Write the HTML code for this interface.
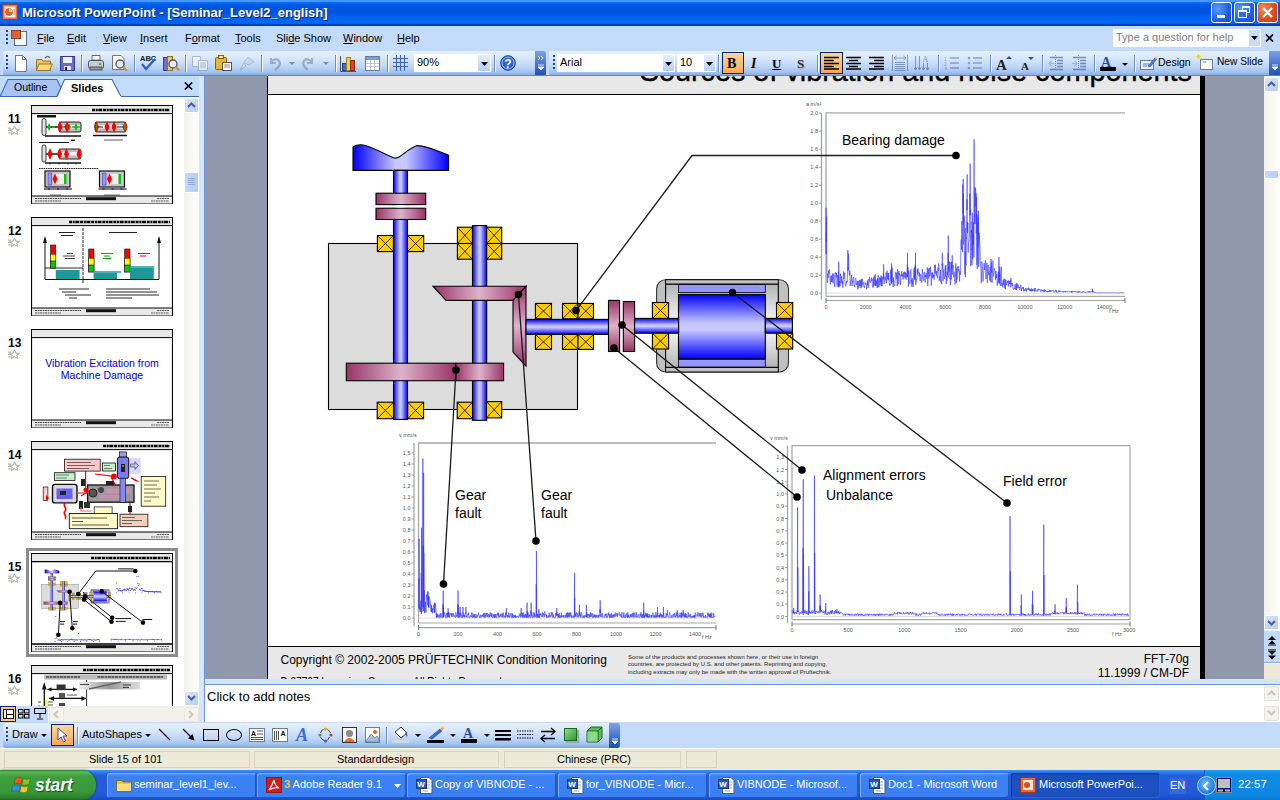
<!DOCTYPE html>
<html><head><meta charset="utf-8">
<style>
*{margin:0;padding:0;box-sizing:border-box}
html,body{width:1280px;height:800px;overflow:hidden;background:#C3DAF9;font-family:"Liberation Sans",sans-serif;}
.a{position:absolute}
.t{position:absolute;white-space:pre;line-height:1}
#title{left:0;top:0;width:1280px;height:26px;background:linear-gradient(#4C9DFF 0px,#4096FF 1.5px,#0A6EFC 2.5px,#005CE8 4px,#0054DE 8px,#0055E0 13px,#0062EE 17px,#0067F6 22px,#0060EE 23.5px,#0040C8 24.5px,#0038B8 26px)}
#menubar{left:0;top:26px;width:1280px;height:25px;background:#C3DAF9}
.tb{position:absolute;height:25px;border-radius:0 4px 4px 0;background:linear-gradient(#E6F1FE 0%,#D6E6FB 30%,#C0D7F7 60%,#A3C2F0 85%,#7EA4E0 100%);}
.grip{position:absolute;width:2px;height:2px;background:#27418F;box-shadow:1px 1px 0 #fff}
.sep{position:absolute;width:1px;height:17px;background:#6A8CCB;box-shadow:1px 0 0 #fff}
.menu{font-size:11px;color:#000;top:32px;line-height:13px}
u{text-decoration:underline;text-underline-offset:1px}
</style></head><body>

<!-- TITLE BAR -->
<div id="title" class="a">
  <svg class="a" style="left:2px;top:4px" width="16" height="16"><rect x=".5" y=".5" width="15" height="15" rx="1" fill="#E8703A" stroke="#A8401A"/><rect x="2.5" y="2.5" width="11" height="11" fill="#FFF4EC"/><circle cx="7" cy="8" r="3.6" fill="#E06428" stroke="#B04818" stroke-width=".6"/><path d="M7 8V4.4A3.6 3.6 0 0 1 10.6 8Z" fill="#F8C8A0"/><path d="M11.5 6H13M11.5 8H13M11.5 10H13" stroke="#C05020" stroke-width=".9"/></svg>
  <div class="t" style="left:22px;top:6px;font-size:13px;font-weight:bold;color:#fff;text-shadow:1px 1px 0 #0A246A">Microsoft PowerPoint - [Seminar_Level2_english]</div>
  <div class="a" style="left:1211px;top:2px;width:21px;height:21px;border:1px solid #fff;border-radius:3px;background:radial-gradient(circle at 30% 30%,#5C9BFF,#1F5FE6 60%,#1848C8)"><div class="a" style="left:5px;top:12px;width:8px;height:3px;background:#fff"></div></div>
  <div class="a" style="left:1234px;top:2px;width:21px;height:21px;border:1px solid #fff;border-radius:3px;background:radial-gradient(circle at 30% 30%,#5C9BFF,#1F5FE6 60%,#1848C8)"><div class="a" style="left:7px;top:3px;width:8px;height:7px;border:1px solid #fff;border-top-width:2px"></div><div class="a" style="left:3px;top:7px;width:9px;height:8px;border:1px solid #fff;border-top-width:2px;background:#2D6BEA"></div></div>
  <div class="a" style="left:1257px;top:2px;width:21px;height:21px;border:1px solid #fff;border-radius:3px;background:radial-gradient(circle at 30% 30%,#F08A5E,#DE4A1E 60%,#C8380E)">
    <svg class="a" style="left:3px;top:3px" width="13" height="13"><path d="M2 2L11 11M11 2L2 11" stroke="#fff" stroke-width="2.2"/></svg></div>
</div>

<!-- MENU BAR -->
<div id="menubar" class="a"></div>
<div class="a" style="left:6px;top:30px;width:2px;height:15px;background:repeating-linear-gradient(#27418F 0 2px,transparent 2px 4px)"></div>
<div class="a" style="left:11px;top:29px;width:17px;height:17px">
  <div class="a" style="left:3px;top:2px;width:13px;height:15px;background:#F5F8FC;border:1px solid #5B6F8C"></div>
  <div class="a" style="left:0;top:1px;width:10px;height:9px;background:#E06030;border:1px solid #A03C10"></div>
</div>
<div class="t menu" style="left:37px"><u>F</u>ile</div>
<div class="t menu" style="left:67px"><u>E</u>dit</div>
<div class="t menu" style="left:103px"><u>V</u>iew</div>
<div class="t menu" style="left:140px"><u>I</u>nsert</div>
<div class="t menu" style="left:185px">F<u>o</u>rmat</div>
<div class="t menu" style="left:235px"><u>T</u>ools</div>
<div class="t menu" style="left:276px">Sli<u>d</u>e Show</div>
<div class="t menu" style="left:343px"><u>W</u>indow</div>
<div class="t menu" style="left:397px"><u>H</u>elp</div>
<div class="a" style="left:1113px;top:29px;width:148px;height:18px;background:#fff"></div>
<div class="a" style="left:1249px;top:30px;width:11px;height:16px;background:#C6DBF8"></div>
<svg class="a" style="left:1251px;top:36px" width="7" height="4"><path d="M0 0H7L3.5 4Z" fill="#000"/></svg>
<div class="t" style="left:1116px;top:32px;font-size:11px;color:#808080">Type a question for help</div>
<svg class="a" style="left:1265px;top:34px" width="9" height="8"><path d="M1 0.5L8 7.5M8 0.5L1 7.5" stroke="#000" stroke-width="1.6"/></svg>

<!-- STANDARD TOOLBAR -->
<div class="tb" style="left:3px;top:51px;width:543px;border-radius:3px"></div>
<div class="a" style="left:535px;top:51px;width:11px;height:25px;border-radius:0 3px 3px 0;background:linear-gradient(#7DA2E6,#1C4DB3)"></div>
<div class="tb" style="left:549px;top:51px;width:731px;border-radius:3px 0 0 3px"></div>
<div class="a" style="left:1269px;top:51px;width:11px;height:25px;background:linear-gradient(#7DA2E6,#1C4DB3)"></div>
<div class="a" style="left:0;top:75px;width:1280px;height:1px;background:#5D86CC"></div>


<!-- standard toolbar content -->
<div class="a" style="left:6px;top:55px;width:2px;height:16px;background:repeating-linear-gradient(#27418F 0 2px,transparent 2px 4px)"></div>
<svg class="a" style="left:14px;top:55px" width="14" height="17"><path d="M1.5 0.5H8.5L12.5 4.5V16.5H1.5Z" fill="#fff" stroke="#6E7A8A"/><path d="M8.5 0.5V4.5H12.5" fill="none" stroke="#6E7A8A"/></svg>
<svg class="a" style="left:36px;top:55px" width="17" height="16"><path d="M0.5 4.5H6L7 6H14.5V15.5H0.5Z" fill="#E8C060" stroke="#A07820"/><path d="M3 9H16.5L13.5 15.5H0.5Z" fill="#F8D878" stroke="#A07820"/><path d="M9 3Q12 0 14 3" fill="none" stroke="#5A7090" stroke-width="1.3"/></svg>
<svg class="a" style="left:60px;top:56px" width="15" height="15"><rect x="0.5" y="0.5" width="14" height="14" fill="#6A6ACC" stroke="#3A3A8A"/><rect x="3" y="1" width="9" height="6" fill="#F0F0F8"/><rect x="4" y="10" width="7" height="4" fill="#E8E8F0"/><rect x="5" y="11" width="2" height="3" fill="#222"/></svg>
<div class="sep" style="left:81px;top:55px"></div>
<svg class="a" style="left:88px;top:55px" width="16" height="16"><path d="M4 0.5H12V5H4Z" fill="#fff" stroke="#666"/><rect x="0.5" y="5.5" width="15" height="8" rx="2" fill="#C8CCD4" stroke="#555"/><rect x="2" y="12" width="12" height="3" fill="#9098A0" stroke="#555"/><rect x="11" y="8" width="2" height="2" fill="#20C020"/></svg>
<svg class="a" style="left:112px;top:55px" width="16" height="17"><path d="M0.5 0.5H9L12 3.5V14.5H0.5Z" fill="#fff" stroke="#777"/><circle cx="8" cy="9" r="4" fill="#E0EAF4" stroke="#555" stroke-width="1.3"/><path d="M11 12L15 16" stroke="#D89030" stroke-width="2.4"/></svg>
<div class="sep" style="left:134px;top:55px"></div>
<svg class="a" style="left:140px;top:54px" width="17" height="17"><text x="0" y="7" font-family="Liberation Sans" font-size="7.5" font-weight="bold" fill="#222">ABC</text><path d="M2 10L6 15L15 5" fill="none" stroke="#2C5CC8" stroke-width="2.2"/></svg>
<svg class="a" style="left:163px;top:55px" width="17" height="17"><rect x="0.5" y="2.5" width="4" height="13" fill="#7A6AD0" stroke="#4A3A90"/><rect x="4.5" y="1.5" width="5" height="14" fill="#E8C860" stroke="#907020"/><circle cx="10" cy="9" r="4" fill="#E4ECF8" stroke="#555" stroke-width="1.3"/><path d="M13 12L16 15.5" stroke="#D89030" stroke-width="2.4"/></svg>
<div class="sep" style="left:185px;top:55px"></div>
<svg class="a" style="left:192px;top:56px" width="16" height="15" opacity=".55"><path d="M0.5 0.5H8.5V10.5H0.5Z" fill="#fff" stroke="#8A96A8"/><path d="M6.5 4.5H15.5V14.5H6.5Z" fill="#fff" stroke="#8A96A8"/><path d="M8 7H14M8 9H14M8 11H14" stroke="#8A96A8"/></svg>
<svg class="a" style="left:215px;top:55px" width="17" height="17"><rect x="0.5" y="2.5" width="11" height="12" rx="1" fill="#E8B830" stroke="#906010"/><rect x="3.5" y="0.5" width="5" height="3" fill="#F8E090" stroke="#906010"/><rect x="7.5" y="7.5" width="9" height="8" fill="#fff" stroke="#555"/><path d="M9 10H15M9 12H15" stroke="#888"/></svg>
<svg class="a" style="left:239px;top:56px" width="16" height="15" opacity=".5"><path d="M9 1L15 6L9 9L5 6Z" fill="#C8D0DC" stroke="#8A96A8"/><path d="M5 7L1 14L7 10Z" fill="#D8DEE8" stroke="#8A96A8"/></svg>
<div class="sep" style="left:261px;top:55px"></div>
<svg class="a" style="left:268px;top:56px" width="14" height="15" opacity=".5"><path d="M3 2V7H8" fill="none" stroke="#6A7C98" stroke-width="2"/><path d="M3 6Q8 1 11 5T7 14" fill="none" stroke="#6A7C98" stroke-width="2.2"/></svg>
<svg class="a" style="left:289px;top:62px" width="6" height="3" opacity=".6"><path d="M0 0H6L3 3Z" fill="#555"/></svg>
<svg class="a" style="left:301px;top:56px" width="14" height="15" opacity=".5"><path d="M11 2V7H6" fill="none" stroke="#6A7C98" stroke-width="2"/><path d="M11 6Q6 1 3 5T7 14" fill="none" stroke="#6A7C98" stroke-width="2.2"/></svg>
<svg class="a" style="left:323px;top:62px" width="6" height="3" opacity=".6"><path d="M0 0H6L3 3Z" fill="#555"/></svg>
<div class="sep" style="left:335px;top:55px"></div>
<svg class="a" style="left:340px;top:55px" width="17" height="17"><path d="M0.5 1V16.5H16" fill="none" stroke="#555"/><rect x="2.5" y="8.5" width="4" height="7" fill="#3C6CE0" stroke="#24409A"/><rect x="6.5" y="2.5" width="4" height="13" fill="#F0D040" stroke="#A08010"/><rect x="10.5" y="5.5" width="4" height="10" fill="#D84820" stroke="#902810"/></svg>
<svg class="a" style="left:365px;top:56px" width="15" height="15"><rect x="0.5" y="0.5" width="14" height="14" fill="#fff" stroke="#6A7C98"/><rect x="1" y="1" width="13" height="3" fill="#7A9CD8"/><path d="M1 7.5H14M1 10.5H14M5.5 4V14M9.5 4V14" stroke="#B8C4D8"/></svg>
<div class="sep" style="left:387px;top:55px"></div>
<svg class="a" style="left:393px;top:55px" width="16" height="16"><path d="M3.5 0V16M7.5 0V16M11.5 0V16M0 3.5H15M0 7.5H15M0 11.5H15" stroke="#3C64B8"/></svg>
<div class="a" style="left:414px;top:54px;width:77px;height:18px;background:#fff"></div>
<div class="a" style="left:478px;top:55px;width:12px;height:16px;background:linear-gradient(#E6F0FD,#B4CDF2)"></div>
<svg class="a" style="left:481px;top:62px" width="7" height="4"><path d="M0 0H7L3.5 4Z" fill="#000"/></svg>
<div class="t" style="left:417px;top:57px;font-size:11px;color:#000">90%</div>
<div class="sep" style="left:494px;top:55px"></div>
<svg class="a" style="left:500px;top:55px" width="16" height="16"><circle cx="8" cy="8" r="7.3" fill="#2C64D8" stroke="#1A3C90"/><circle cx="8" cy="8" r="6" fill="none" stroke="#9CC0F4"/><text x="8" y="12.5" text-anchor="middle" font-family="Liberation Sans" font-weight="bold" font-size="12" fill="#fff">?</text></svg>
<svg class="a" style="left:537px;top:55px" width="8" height="18"><path d="M1 1L3 3L1 5M4 1L6 3L4 5" fill="none" stroke="#fff" stroke-width="1"/><path d="M1 10H7M1 12H7L4 15Z" fill="#fff" stroke="#fff" stroke-width=".8"/></svg>

<!-- formatting toolbar content -->
<div class="a" style="left:553px;top:55px;width:2px;height:16px;background:repeating-linear-gradient(#27418F 0 2px,transparent 2px 4px)"></div>
<div class="a" style="left:557px;top:54px;width:118px;height:18px;background:#fff"></div>
<div class="a" style="left:663px;top:55px;width:11px;height:16px;background:linear-gradient(#E6F0FD,#B4CDF2)"></div>
<svg class="a" style="left:665px;top:62px" width="7" height="4"><path d="M0 0H7L3.5 4Z" fill="#000"/></svg>
<div class="t" style="left:560px;top:57px;font-size:11px;color:#000">Arial</div>
<div class="a" style="left:677px;top:54px;width:39px;height:18px;background:#fff"></div>
<div class="a" style="left:704px;top:55px;width:11px;height:16px;background:linear-gradient(#E6F0FD,#B4CDF2)"></div>
<svg class="a" style="left:706px;top:62px" width="7" height="4"><path d="M0 0H7L3.5 4Z" fill="#000"/></svg>
<div class="t" style="left:680px;top:57px;font-size:11px;color:#000">10</div>
<div class="sep" style="left:718px;top:55px"></div>
<div class="a" style="left:722px;top:52px;width:22px;height:22px;border:1px solid #0A246A;background:linear-gradient(#FDD5A0,#F9A952)"></div>
<div class="t" style="left:727px;top:56px;font:bold 14px 'Liberation Serif';color:#000">B</div>
<div class="t" style="left:751px;top:56px;font:italic bold 14px 'Liberation Serif';color:#000">I</div>
<div class="t" style="left:772px;top:56px;font:bold 13px 'Liberation Serif';color:#000;text-decoration:underline">U</div>
<div class="t" style="left:797px;top:56px;font:bold 13px 'Liberation Serif';color:#333;text-shadow:1px 1px 1px #999">S</div>
<div class="sep" style="left:817px;top:55px"></div>
<div class="a" style="left:820px;top:52px;width:23px;height:22px;border:1px solid #0A246A;background:linear-gradient(#FDD5A0,#F9A952)"></div>
<svg class="a" style="left:824px;top:56px" width="15" height="14"><path d="M0 1.5H15M0 4.5H10M0 7.5H15M0 10.5H10M0 13H15" stroke="#000" stroke-width="1.3"/></svg>
<svg class="a" style="left:846px;top:56px" width="15" height="14"><path d="M0 1.5H15M3 4.5H12M0 7.5H15M3 10.5H12M0 13H15" stroke="#000" stroke-width="1.3"/></svg>
<svg class="a" style="left:869px;top:56px" width="15" height="14"><path d="M0 1.5H15M5 4.5H15M0 7.5H15M5 10.5H15M0 13H15" stroke="#000" stroke-width="1.3"/></svg>
<svg class="a" style="left:892px;top:55px" width="16" height="16" opacity=".5"><path d="M.5 0V16M15.5 0V16M3 7.5H13M3 9.5H13M3 11.5H13M3 13.5H13M3 15.5H13" stroke="#3C5490"/><path d="M2 3H14M4.5 1L2 3L4.5 5M11.5 1L14 3L11.5 5" fill="none" stroke="#3C5490"/></svg>
<svg class="a" style="left:914px;top:55px" width="16" height="16" opacity=".55"><path d="M1.5 1V15M5.5 1V15M9.5 8V15M13.5 8V15" stroke="#3C5490"/><path d="M0 12.5L1.5 15L3 12.5M4 12.5L5.5 15L7 12.5M8 12.5L9.5 15L11 12.5M12 12.5L13.5 15L15 12.5" fill="none" stroke="#3C5490"/><text x="8.5" y="7" font-size="8" font-family="Liberation Serif" fill="#3C5490">A</text></svg>
<div class="sep" style="left:938px;top:55px"></div>
<svg class="a" style="left:944px;top:56px" width="16" height="14" opacity=".45"><path d="M6 2H15M6 7H15M6 12H15" stroke="#3C5490" stroke-width="1.3"/><text x="0" y="5" font-size="5" fill="#3C5490" font-family="Liberation Sans">1</text><text x="0" y="10" font-size="5" fill="#3C5490" font-family="Liberation Sans">2</text><text x="0" y="14.5" font-size="5" fill="#3C5490" font-family="Liberation Sans">3</text></svg>
<svg class="a" style="left:967px;top:56px" width="15" height="14" opacity=".45"><path d="M6 2H15M6 7H15M6 12H15" stroke="#3C5490" stroke-width="1.3"/><circle cx="2" cy="2" r="1.3" fill="#3C5490"/><circle cx="2" cy="7" r="1.3" fill="#3C5490"/><circle cx="2" cy="12" r="1.3" fill="#3C5490"/></svg>
<div class="sep" style="left:990px;top:55px"></div>
<div class="t" style="left:996px;top:57px;font:bold 15px 'Liberation Serif';color:#222">A</div>
<svg class="a" style="left:1006px;top:56px" width="6" height="3"><path d="M0 3H6L3 0Z" fill="#2A4C9C"/></svg>
<div class="t" style="left:1021px;top:60px;font:bold 11px 'Liberation Serif';color:#222">A</div>
<svg class="a" style="left:1028px;top:57px" width="6" height="3"><path d="M0 0H6L3 3Z" fill="#2A4C9C"/></svg>
<div class="sep" style="left:1042px;top:55px"></div>
<svg class="a" style="left:1048px;top:55px" width="16" height="16" opacity=".6"><path d="M7.5 0V16" stroke="#3C5490" stroke-dasharray="1 1"/><path d="M2 2.5H15M9 5.5H15M9 8.5H15M9 11.5H15M2 14.5H15" stroke="#3C5490" stroke-width="1.3"/><path d="M6 8.5H1M3.5 6L1 8.5L3.5 11" fill="none" stroke="#8A9AB8" stroke-width="1.2"/></svg>
<svg class="a" style="left:1071px;top:55px" width="16" height="16" opacity=".6"><path d="M7.5 0V16" stroke="#3C5490" stroke-dasharray="1 1"/><path d="M2 2.5H15M9 5.5H15M9 8.5H15M9 11.5H15M2 14.5H15" stroke="#3C5490" stroke-width="1.3"/><path d="M1 8.5H6M3.5 6L6 8.5L3.5 11" fill="none" stroke="#8A9AB8" stroke-width="1.2"/></svg>
<div class="sep" style="left:1094px;top:55px"></div>
<div class="t" style="left:1101px;top:55px;font:bold 14px 'Liberation Serif';color:#2A4C9C">A</div>
<div class="a" style="left:1100px;top:67px;width:16px;height:4px;background:#000"></div>
<svg class="a" style="left:1122px;top:63px" width="6" height="3"><path d="M0 0H6L3 3Z" fill="#000"/></svg>
<div class="sep" style="left:1134px;top:55px"></div>
<svg class="a" style="left:1140px;top:56px" width="17" height="15"><rect x="0.5" y="4.5" width="13" height="9" fill="#E8EEF8" stroke="#6A7C98"/><path d="M3 8H9M3 10H7" stroke="#5A7CC8"/><path d="M8 10L15 2L16.5 3.5L10 11Z" fill="#4A7CD8" stroke="#2A4C9C" stroke-width=".6"/><path d="M14 1.5L16 0.5L17 2L16 3.5Z" fill="#F0B030"/></svg>
<div class="t" style="left:1158px;top:57px;font-size:10.5px;color:#000">Design</div>
<svg class="a" style="left:1196px;top:54px" width="18" height="17"><path d="M1 1L4 4M4 1L1 4M0 2.5H5M2.5 0V5" stroke="#F8D020" stroke-width="1"/><rect x="4.5" y="5.5" width="12" height="10" fill="#F8F8F4" stroke="#6A7C98"/><path d="M7 8H10" stroke="#6A7C98"/></svg>
<div class="t" style="left:1217px;top:57px;font-size:10.2px;color:#000">New Slide</div>
<svg class="a" style="left:1271px;top:64px" width="8" height="8"><path d="M1 1H7M1 3H7L4 6Z" fill="#fff" stroke="#fff" stroke-width=".8"/></svg>



<!-- SLIDE AREA -->
<div class="a" style="left:205px;top:76px;width:1059px;height:603px;background:#8F98AD;overflow:hidden">
  <div class="a" style="left:62px;top:-35px;width:938px;height:658px;background:#000"></div>
  <svg class="a" style="left:63px;top:-35px" width="932" height="653"><use href="#s15"/></svg>
</div>
<svg width="0" height="0" style="position:absolute"><defs>
<linearGradient id="gbh" x1="0" y1="0" x2="1" y2="0"><stop offset="0" stop-color="#0000FF"/><stop offset=".45" stop-color="#C8C8FF"/><stop offset=".55" stop-color="#C8C8FF"/><stop offset="1" stop-color="#0000FF"/></linearGradient>
<linearGradient id="gbv" x1="0" y1="0" x2="0" y2="1"><stop offset="0" stop-color="#0000FF"/><stop offset=".45" stop-color="#C8C8FF"/><stop offset=".55" stop-color="#C8C8FF"/><stop offset="1" stop-color="#0000FF"/></linearGradient>
<linearGradient id="gmh" x1="0" y1="0" x2="1" y2="0"><stop offset="0" stop-color="#993366"/><stop offset=".5" stop-color="#DDB3CC"/><stop offset="1" stop-color="#993366"/></linearGradient>
<linearGradient id="gmv" x1="0" y1="0" x2="0" y2="1"><stop offset="0" stop-color="#993366"/><stop offset=".5" stop-color="#DDB3CC"/><stop offset="1" stop-color="#993366"/></linearGradient>
<linearGradient id="ggv" x1="0" y1="0" x2="0" y2="1"><stop offset="0" stop-color="#B4B4B4"/><stop offset=".5" stop-color="#FFFFFF"/><stop offset="1" stop-color="#B4B4B4"/></linearGradient>
<symbol id="s15d" viewBox="268 41 932 653"><rect x="328.5" y="243.5" width="249" height="166" fill="#DCDCDC" stroke="#000" stroke-width="1.1"/><path d="M353 147 C 362 141, 372 148, 393.5 157.8 C 400 160, 405 150, 417 145.6 C 428 146, 440 152, 448.6 155.3 V170.4 H353 Z" fill="url(#gbh)" stroke="#000" stroke-width="1.1"/><rect x="393.5" y="170.4" width="14" height="249" fill="url(#gbh)" stroke="#000" stroke-width="1.1"/><rect x="376" y="193.2" width="49.7" height="11.4" fill="url(#gmh)" stroke="#000" stroke-width="1.1"/><rect x="376" y="208.2" width="49.7" height="11.3" fill="url(#gmh)" stroke="#000" stroke-width="1.1"/><rect x="393" y="205.2" width="15" height="2.4" fill="#fff"/><rect x="377.4" y="235.5" width="16" height="16.1" fill="#FFCC00" stroke="#000" stroke-width="1.1"/><path d="M377.4 235.5L393.4 251.6M393.4 235.5L377.4 251.6" stroke="#000" stroke-width=".8"/><rect x="407.5" y="235.5" width="16.2" height="16.1" fill="#FFCC00" stroke="#000" stroke-width="1.1"/><path d="M407.5 235.5L423.7 251.6M423.7 235.5L407.5 251.6" stroke="#000" stroke-width=".8"/><rect x="377.2" y="402.2" width="16.3" height="16.5" fill="#FFCC00" stroke="#000" stroke-width="1.1"/><path d="M377.2 402.2L393.5 418.7M393.5 402.2L377.2 418.7" stroke="#000" stroke-width=".8"/><rect x="407.7" y="402.2" width="15.9" height="16.5" fill="#FFCC00" stroke="#000" stroke-width="1.1"/><path d="M407.7 402.2L423.59999999999997 418.7M423.59999999999997 402.2L407.7 418.7" stroke="#000" stroke-width=".8"/><rect x="472.5" y="225.6" width="14.2" height="194.7" fill="url(#gbh)" stroke="#000" stroke-width="1.1"/><rect x="457.4" y="227.2" width="15" height="16.3" fill="#FFCC00" stroke="#000" stroke-width="1.1"/><path d="M457.4 227.2L472.4 243.5M472.4 227.2L457.4 243.5" stroke="#000" stroke-width=".8"/><rect x="457.4" y="243.5" width="15" height="15.7" fill="#FFCC00" stroke="#000" stroke-width="1.1"/><path d="M457.4 243.5L472.4 259.2M472.4 243.5L457.4 259.2" stroke="#000" stroke-width=".8"/><rect x="486.7" y="227.2" width="15" height="16.3" fill="#FFCC00" stroke="#000" stroke-width="1.1"/><path d="M486.7 227.2L501.7 243.5M501.7 227.2L486.7 243.5" stroke="#000" stroke-width=".8"/><rect x="486.7" y="243.5" width="15" height="15.7" fill="#FFCC00" stroke="#000" stroke-width="1.1"/><path d="M486.7 243.5L501.7 259.2M501.7 243.5L486.7 259.2" stroke="#000" stroke-width=".8"/><rect x="457.2" y="402.2" width="15.3" height="16.5" fill="#FFCC00" stroke="#000" stroke-width="1.1"/><path d="M457.2 402.2L472.5 418.7M472.5 402.2L457.2 418.7" stroke="#000" stroke-width=".8"/><rect x="486.5" y="401.6" width="15.2" height="16.3" fill="#FFCC00" stroke="#000" stroke-width="1.1"/><path d="M486.5 401.6L501.7 417.90000000000003M501.7 401.6L486.5 417.90000000000003" stroke="#000" stroke-width=".8"/><rect x="346.3" y="363.2" width="109.5" height="17.5" fill="url(#gmh)" stroke="#000" stroke-width="1.1"/><rect x="455.8" y="363.2" width="47.8" height="17.5" fill="url(#gmh)" stroke="#000" stroke-width="1.1"/><path d="M433 286.2 H526 L513 300.4 H446 Z" fill="url(#gmh)" stroke="#000" stroke-width="1.1"/><path d="M526 286.2 V366 L513 352 V300.4 Z" fill="url(#gmv)" stroke="#000" stroke-width="1.1"/><rect x="526" y="319.4" width="82.5" height="15" fill="url(#gbv)" stroke="#000" stroke-width="1.1"/><rect x="535.4" y="303.4" width="16.1" height="15.35" fill="#FFCC00" stroke="#000" stroke-width="1.1"/><path d="M535.4 303.4L551.5 318.75M551.5 303.4L535.4 318.75" stroke="#000" stroke-width=".8"/><rect x="535.4" y="334.4" width="16.1" height="15" fill="#FFCC00" stroke="#000" stroke-width="1.1"/><path d="M535.4 334.4L551.5 349.4M551.5 334.4L535.4 349.4" stroke="#000" stroke-width=".8"/><rect x="562.5" y="303.4" width="15.5" height="15.35" fill="#FFCC00" stroke="#000" stroke-width="1.1"/><path d="M562.5 303.4L578.0 318.75M578.0 303.4L562.5 318.75" stroke="#000" stroke-width=".8"/><rect x="562.5" y="334.4" width="15.5" height="15" fill="#FFCC00" stroke="#000" stroke-width="1.1"/><path d="M562.5 334.4L578.0 349.4M578.0 334.4L562.5 349.4" stroke="#000" stroke-width=".8"/><rect x="578" y="303.4" width="15.5" height="15.35" fill="#FFCC00" stroke="#000" stroke-width="1.1"/><path d="M578 303.4L593.5 318.75M593.5 303.4L578 318.75" stroke="#000" stroke-width=".8"/><rect x="578" y="334.4" width="15.5" height="15" fill="#FFCC00" stroke="#000" stroke-width="1.1"/><path d="M578 334.4L593.5 349.4M593.5 334.4L578 349.4" stroke="#000" stroke-width=".8"/><rect x="608.5" y="300.4" width="11.1" height="51.1" fill="url(#gmv)" stroke="#000" stroke-width="1.1"/><rect x="623.3" y="301.5" width="11.3" height="50" fill="url(#gmv)" stroke="#000" stroke-width="1.1"/><rect x="656.6" y="279.7" width="131.9" height="92.3" rx="9" fill="#C0C0C0" stroke="#333" stroke-width="1.1"/><rect x="665.6" y="284" width="112.7" height="83.4" fill="url(#ggv)" stroke="#000" stroke-width="1.1"/><rect x="665.6" y="279.7" width="112.7" height="4.3" fill="#C0C0C0" stroke="#000" stroke-width="1"/><rect x="665.6" y="367.4" width="112.7" height="4.6" fill="#C0C0C0" stroke="#000" stroke-width="1"/><rect x="678.5" y="284.6" width="86.8" height="8" fill="#9595FF" stroke="#000" stroke-width=".8"/><rect x="678.5" y="294.5" width="86.8" height="64.3" fill="url(#gbv)" stroke="#000" stroke-width="1.1"/><rect x="678.5" y="359.5" width="86.8" height="7.5" fill="#9595FF" stroke="#000" stroke-width=".8"/><rect x="634.6" y="318.4" width="44" height="14.8" fill="url(#gbv)" stroke="#000" stroke-width="1.1"/><rect x="765.3" y="318.4" width="27.1" height="14.8" fill="url(#gbv)" stroke="#000" stroke-width="1.1"/><rect x="652.4" y="302.5" width="16.2" height="15.9" fill="#FFCC00" stroke="#000" stroke-width="1.1"/><path d="M652.4 302.5L668.6 318.4M668.6 302.5L652.4 318.4" stroke="#000" stroke-width=".8"/><rect x="652.4" y="333.2" width="16.2" height="15.8" fill="#FFCC00" stroke="#000" stroke-width="1.1"/><path d="M652.4 333.2L668.6 349.0M668.6 333.2L652.4 349.0" stroke="#000" stroke-width=".8"/><rect x="776.5" y="302.5" width="16.2" height="15.9" fill="#FFCC00" stroke="#000" stroke-width="1.1"/><path d="M776.5 302.5L792.7 318.4M792.7 302.5L776.5 318.4" stroke="#000" stroke-width=".8"/><rect x="776.5" y="333.2" width="16.2" height="15.8" fill="#FFCC00" stroke="#000" stroke-width="1.1"/><path d="M776.5 333.2L792.7 349.0M792.7 333.2L776.5 349.0" stroke="#000" stroke-width=".8"/></symbol><symbol id="s15" viewBox="268 41 932 653"><rect x="268" y="41" width="932" height="653" fill="#fff"/><rect x="268" y="41" width="932" height="53" fill="#E8E8E8"/><rect x="268" y="94" width="932" height="1" fill="#000"/><text x="1192" y="81" text-anchor="end" font-family="Liberation Sans" font-size="28.8" stroke="#000" stroke-width=".4" fill="#000">Sources of vibration and noise components</text><rect x="268" y="647" width="932" height="47" fill="#E8E8E8"/><rect x="268" y="646" width="932" height="1" fill="#000"/><text x="280.5" y="663.5" font-family="Liberation Sans" font-size="12" fill="#000">Copyright © 2002-2005 PRÜFTECHNIK Condition Monitoring</text><text x="280.5" y="686" font-family="Liberation Sans" font-size="12" fill="#000" textLength="221" lengthAdjust="spacingAndGlyphs">D 27767 Ismaning, Germany. All Rights Reserved</text><g font-family="Liberation Sans" font-size="6" fill="#222"><text x="628" y="659">Some of the products and processes shown here, or their use in foreign</text><text x="628" y="666">countries, are protected by U.S. and other patents. Reprinting and copying,</text><text x="628" y="673.5">including extracts may only be made with the written  approval of Pruftechnik.</text></g><text x="1189" y="663" text-anchor="end" font-family="Liberation Sans" font-size="12" fill="#000">FFT-70g</text><text x="1189" y="676.5" text-anchor="end" font-family="Liberation Sans" font-size="12" fill="#000">11.1999 / CM-DF</text><use href="#s15d" x="268" y="41" width="932" height="653"/><g font-family="Liberation Sans"><path d="M821.5 112.9 V299.4" stroke="#A0A0A0" stroke-width="1.2"/><path d="M819 293.2H821.5" stroke="#888" stroke-width=".8"/><text x="818" y="295.2" text-anchor="end" font-size="5.5" fill="#555">0,0</text><path d="M819 275.2H821.5" stroke="#888" stroke-width=".8"/><text x="818" y="277.2" text-anchor="end" font-size="5.5" fill="#555">0,2</text><path d="M819 257.2H821.5" stroke="#888" stroke-width=".8"/><text x="818" y="259.2" text-anchor="end" font-size="5.5" fill="#555">0,4</text><path d="M819 239.2H821.5" stroke="#888" stroke-width=".8"/><text x="818" y="241.2" text-anchor="end" font-size="5.5" fill="#555">0,6</text><path d="M819 221.2H821.5" stroke="#888" stroke-width=".8"/><text x="818" y="223.2" text-anchor="end" font-size="5.5" fill="#555">0,8</text><path d="M819 203.2H821.5" stroke="#888" stroke-width=".8"/><text x="818" y="205.2" text-anchor="end" font-size="5.5" fill="#555">1,0</text><path d="M819 185.2H821.5" stroke="#888" stroke-width=".8"/><text x="818" y="187.2" text-anchor="end" font-size="5.5" fill="#555">1,2</text><path d="M819 167.2H821.5" stroke="#888" stroke-width=".8"/><text x="818" y="169.2" text-anchor="end" font-size="5.5" fill="#555">1,4</text><path d="M819 149.2H821.5" stroke="#888" stroke-width=".8"/><text x="818" y="151.2" text-anchor="end" font-size="5.5" fill="#555">1,6</text><path d="M819 131.2H821.5" stroke="#888" stroke-width=".8"/><text x="818" y="133.2" text-anchor="end" font-size="5.5" fill="#555">1,8</text><path d="M819 113.2H821.5" stroke="#888" stroke-width=".8"/><text x="818" y="115.2" text-anchor="end" font-size="5.5" fill="#555">2,0</text><path d="M826 296.4 V112.9 H1125" fill="none" stroke="#A8A8A8" stroke-width="1.3"/><path d="M826 296.4 H1125" stroke="#A8A8A8" stroke-width="1.2"/><path d="M826 293.2 H1125" stroke="#D0D0D0" stroke-width=".7"/><path d="M826 300.5 H1125" stroke="#A0A0A0" stroke-width="1.2"/><path d="M826 298.0 V303.0M1125 298.0 V303.0" stroke="#707070" stroke-width="1"/><text x="826.0" y="308.5" text-anchor="middle" font-size="5.5" fill="#555">0</text><text x="865.8" y="308.5" text-anchor="middle" font-size="5.5" fill="#555">2000</text><text x="905.5" y="308.5" text-anchor="middle" font-size="5.5" fill="#555">4000</text><text x="945.3" y="308.5" text-anchor="middle" font-size="5.5" fill="#555">6000</text><text x="985.0" y="308.5" text-anchor="middle" font-size="5.5" fill="#555">8000</text><text x="1024.8" y="308.5" text-anchor="middle" font-size="5.5" fill="#555">10000</text><text x="1064.6" y="308.5" text-anchor="middle" font-size="5.5" fill="#555">12000</text><text x="1104.3" y="308.5" text-anchor="middle" font-size="5.5" fill="#555">14000</text><text x="806" y="106" font-size="5.5" fill="#555">a m/s²</text><text x="1109" y="313" font-size="5.5" fill="#555">f Hz</text><polyline points="825.84,233.35 826.00,254.01 826.00,207.70 826.16,241.90 826.32,228.03 826.64,216.54 826.95,272.34 827.27,282.76 827.59,282.55 827.91,273.41 828.23,277.72 828.54,270.57 828.86,272.99 829.18,269.37 829.50,269.60 829.82,277.12 830.14,282.04 830.45,284.32 830.77,276.19 831.09,277.01 831.41,281.76 831.73,275.51 832.04,282.01 832.36,280.79 832.68,273.56 833.00,283.29 833.32,278.35 833.63,276.56 833.95,273.47 834.27,280.28 834.59,284.96 834.91,286.94 835.22,274.26 835.54,272.34 835.86,275.51 836.18,277.54 836.50,273.03 836.81,279.42 837.13,286.62 837.45,276.45 837.77,274.94 838.09,281.01 838.41,287.31 838.56,271.15 838.72,286.05 838.72,261.70 838.88,274.30 839.04,286.69 839.36,286.09 839.68,280.99 840.00,286.34 840.31,278.30 840.63,273.68 840.95,282.98 841.27,281.61 841.59,276.50 841.90,280.63 842.22,283.79 842.54,280.77 842.86,287.72 843.18,281.51 843.49,271.62 843.81,279.06 844.13,277.71 844.45,272.60 844.77,273.04 845.08,281.21 845.40,286.09 845.72,286.44 846.04,284.91 846.36,281.72 846.68,283.33 846.99,280.79 847.31,281.78 847.63,270.31 847.71,262.96 847.87,250.00 847.95,270.97 848.03,267.28 848.27,269.66 848.58,253.64 848.90,268.61 849.22,275.08 849.54,275.45 849.86,270.70 850.17,285.96 850.49,281.67 850.81,280.48 851.13,280.00 851.45,275.09 851.76,284.48 852.08,286.02 852.40,280.85 852.72,282.41 853.04,277.41 853.35,277.16 853.67,277.94 853.99,286.03 854.31,285.27 854.63,287.05 854.95,286.07 855.26,277.81 855.58,278.39 855.90,278.52 856.22,282.83 856.54,285.19 856.85,283.10 857.17,281.10 857.49,283.32 857.81,289.21 858.13,280.94 858.44,282.44 858.76,288.15 859.08,286.53 859.40,279.86 859.72,285.70 860.03,283.96 860.35,286.22 860.67,280.12 860.99,288.19 861.31,279.09 861.62,285.87 861.94,287.06 862.26,278.85 862.58,283.72 862.90,284.70 863.22,282.43 863.53,284.54 863.85,286.73 864.17,286.47 864.49,287.92 864.81,285.25 865.12,282.45 865.44,284.33 865.76,283.28 866.08,283.11 866.40,283.50 866.71,289.22 867.03,287.09 867.35,280.12 867.67,285.07 867.99,282.09 868.30,287.77 868.62,286.83 868.94,279.05 869.26,281.70 869.58,277.01 869.90,280.87 870.21,282.13 870.53,282.86 870.85,282.44 871.17,279.37 871.49,277.66 871.80,281.11 872.12,279.13 872.44,287.07 872.76,287.39 873.08,287.67 873.39,277.54 873.71,286.44 874.03,282.78 874.35,275.81 874.67,285.37 874.98,282.70 875.30,273.92 875.62,286.09 875.94,280.72 876.26,285.43 876.57,281.36 876.89,279.73 877.21,287.95 877.53,278.35 877.85,287.11 878.17,275.41 878.48,280.87 878.80,287.33 879.12,285.40 879.44,280.83 879.76,277.42 880.07,285.24 880.39,277.93 880.71,282.03 881.03,275.59 881.35,286.30 881.66,276.22 881.98,285.97 882.30,286.22 882.62,279.08 882.94,277.12 883.25,279.71 883.49,273.04 883.57,278.52 883.65,264.40 883.81,275.92 883.89,281.81 884.21,283.99 884.53,281.07 884.84,276.68 885.16,276.94 885.48,278.51 885.80,280.23 886.12,272.39 886.44,283.15 886.75,275.77 887.07,270.69 887.39,277.10 887.71,279.12 888.03,273.28 888.34,280.11 888.66,272.91 888.98,278.89 889.30,282.36 889.62,285.50 889.93,283.67 890.25,285.23 890.57,269.66 890.89,275.49 891.21,281.10 891.44,272.41 891.52,283.78 891.60,263.50 891.76,275.38 891.84,281.69 892.16,267.64 892.48,282.06 892.80,280.77 893.11,286.88 893.43,277.50 893.75,282.92 894.07,284.86 894.39,285.12 894.71,285.60 895.02,283.24 895.34,275.31 895.66,272.04 895.98,272.72 896.30,279.19 896.61,273.29 896.93,272.56 897.25,286.03 897.57,269.24 897.89,272.37 898.20,284.14 898.52,276.91 898.84,270.97 899.16,275.34 899.48,273.38 899.79,277.86 900.11,284.26 900.43,284.82 900.75,275.84 901.07,274.50 901.38,275.86 901.70,271.11 902.02,276.94 902.34,275.39 902.66,273.85 902.98,279.64 903.29,276.05 903.61,272.25 903.93,277.12 904.25,277.42 904.57,271.71 904.88,272.94 905.20,278.46 905.52,272.18 905.84,273.92 906.16,279.81 906.47,273.59 906.79,273.56 907.11,276.67 907.35,264.85 907.43,277.17 907.51,252.70 907.67,268.90 907.75,273.19 908.06,267.53 908.38,286.55 908.70,270.67 909.02,274.33 909.34,282.75 909.66,282.73 909.97,284.09 910.29,276.06 910.61,270.66 910.93,269.34 911.25,282.32 911.56,279.80 911.88,286.83 912.20,277.97 912.52,284.11 912.84,280.64 913.15,286.87 913.47,278.58 913.79,268.56 914.11,268.80 914.43,279.53 914.74,267.12 915.06,279.76 915.30,264.85 915.38,280.60 915.46,252.70 915.62,268.90 915.70,284.89 916.02,281.24 916.33,281.60 916.65,279.19 916.97,279.51 917.29,269.39 917.61,274.41 917.93,268.27 918.24,270.46 918.56,272.40 918.88,272.00 919.20,276.62 919.52,272.58 919.83,277.55 920.15,281.00 920.47,274.29 920.79,273.91 921.11,275.87 921.42,279.73 921.74,282.78 922.06,279.92 922.38,268.96 922.70,273.47 923.01,278.28 923.33,279.21 923.65,280.69 923.97,275.62 924.29,272.06 924.60,278.71 924.92,279.44 925.24,282.55 925.56,275.12 925.88,276.84 926.20,273.21 926.51,277.29 926.83,278.73 927.15,267.46 927.47,268.23 927.79,286.05 928.10,268.35 928.42,271.47 928.74,278.56 929.06,269.51 929.38,267.94 929.69,276.11 930.01,275.59 930.33,266.71 930.65,272.82 930.97,276.77 931.28,285.59 931.60,281.44 931.92,272.55 932.24,278.08 932.56,272.60 932.87,278.24 933.19,274.88 933.51,276.34 933.83,274.70 934.15,279.58 934.47,265.03 934.78,266.59 935.10,273.75 935.42,264.69 935.74,271.95 936.06,274.87 936.37,275.72 936.69,270.92 937.01,275.87 937.33,278.26 937.65,274.30 937.96,267.63 938.28,270.95 938.60,263.46 938.92,265.15 939.24,280.66 939.55,278.90 939.87,276.53 940.19,280.48 940.51,270.03 940.83,282.22 941.14,280.60 941.46,281.43 941.78,284.17 942.10,264.06 942.14,264.85 942.30,252.70 942.42,267.94 942.46,268.90 942.74,263.06 943.05,281.01 943.37,274.19 943.69,269.27 944.01,276.29 944.33,278.77 944.64,278.49 944.96,270.14 945.28,265.80 945.60,276.50 945.92,264.98 946.23,284.11 946.55,276.10 946.87,280.55 947.19,271.84 947.51,275.16 947.82,270.75 948.10,252.88 948.14,277.61 948.26,235.60 948.42,258.64 948.46,270.08 948.78,266.83 949.10,271.88 949.42,261.62 949.73,278.84 950.05,278.16 950.37,285.23 950.69,262.64 951.01,262.31 951.32,279.54 951.64,261.64 951.96,268.70 952.08,266.74 952.24,255.40 952.28,274.68 952.40,270.52 952.60,268.52 952.91,265.46 953.23,264.96 953.55,270.30 953.87,277.42 954.19,271.69 954.50,280.44 954.82,279.82 955.14,284.49 955.46,277.26 955.78,263.46 956.09,271.11 956.41,282.94 956.73,267.76 957.05,279.53 957.37,269.97 957.69,266.81 958.00,267.85 958.32,266.18 958.64,271.29 958.96,269.18 959.28,274.19 959.59,281.53 959.91,271.01 960.23,274.87 960.55,270.42 960.87,247.81 961.18,239.35 961.50,249.66 961.82,221.11 962.14,244.69 962.46,252.14 962.77,184.55 963.01,213.19 963.09,188.15 963.17,178.90 963.33,224.62 963.41,193.54 963.73,244.55 964.05,215.70 964.36,216.26 964.68,248.11 965.00,274.30 965.00,251.32 965.16,266.20 965.32,277.00 965.32,244.97 965.64,228.28 965.96,265.47 966.27,237.41 966.59,238.78 966.91,199.50 966.99,210.04 967.15,174.40 967.23,230.30 967.31,221.92 967.55,233.16 967.86,222.90 968.18,252.65 968.50,242.30 968.82,240.54 969.14,240.14 969.45,236.37 969.77,193.70 969.97,202.48 970.09,214.76 970.13,163.60 970.29,215.44 970.41,209.96 970.73,265.93 971.04,230.77 971.36,232.24 971.68,229.94 971.96,242.80 972.00,265.18 972.12,221.20 972.28,250.00 972.32,212.51 972.63,258.93 972.95,235.22 973.27,244.68 973.59,222.57 973.91,257.27 973.95,185.47 974.11,139.30 974.23,198.70 974.27,200.86 974.54,224.26 974.86,187.07 975.18,206.43 975.50,188.49 975.82,190.33 975.93,223.90 976.09,194.20 976.13,193.69 976.25,233.80 976.45,196.99 976.77,232.39 976.93,264.85 977.09,252.70 977.09,214.52 977.25,268.90 977.41,248.07 977.72,222.84 977.92,239.65 978.04,239.46 978.08,216.70 978.24,247.30 978.36,210.73 978.68,266.88 979.00,243.76 979.31,232.84 979.63,241.96 979.95,245.91 980.27,260.55 980.59,264.62 980.90,268.26 981.22,283.08 981.54,276.22 981.86,261.41 982.18,265.95 982.50,268.05 982.81,280.25 983.13,281.36 983.45,275.37 983.77,270.63 984.09,263.23 984.40,266.45 984.72,269.98 985.04,263.75 985.36,260.31 985.68,263.94 985.99,279.00 986.31,270.84 986.63,265.06 986.95,262.93 987.27,282.75 987.58,273.42 987.90,266.92 988.22,264.84 988.54,271.28 988.86,275.24 989.18,271.38 989.49,277.62 989.81,280.63 990.13,267.17 990.45,280.56 990.77,282.01 990.84,269.26 991.00,259.00 991.08,268.66 991.16,272.68 991.40,262.73 991.72,270.34 992.04,282.49 992.36,269.31 992.67,267.27 992.99,260.55 993.31,276.36 993.63,275.39 993.95,271.25 994.26,268.32 994.58,269.92 994.90,271.33 995.22,274.68 995.54,279.73 995.85,270.96 996.17,273.52 996.49,278.06 996.81,274.25 997.13,285.73 997.45,283.36 997.76,280.70 998.08,276.55 998.40,271.73 998.72,282.93 998.80,268.00 998.96,257.20 999.04,281.74 999.12,271.60 999.35,283.92 999.67,266.69 999.99,271.97 1000.31,285.94 1000.63,273.91 1000.94,272.21 1001.26,266.75 1001.58,281.67 1001.90,286.09 1002.22,282.79 1002.53,286.34 1002.85,287.41 1003.17,279.74 1003.49,284.88 1003.81,280.52 1004.12,278.57 1004.44,284.45 1004.76,288.35 1005.08,279.10 1005.40,289.08 1005.72,279.85 1006.03,280.03 1006.35,283.27 1006.67,284.88 1006.99,285.33 1007.31,281.12 1007.62,281.09 1007.94,283.03 1008.26,280.43 1008.58,286.54 1008.90,282.63 1009.21,281.23 1009.53,284.02 1009.85,281.62 1010.17,281.73 1010.49,280.43 1010.72,282.49 1010.80,287.33 1010.88,277.90 1011.04,284.02 1011.12,283.33 1011.44,283.10 1011.76,285.21 1012.08,283.02 1012.39,285.73 1012.71,284.52 1013.03,288.09 1013.35,289.43 1013.67,289.15 1013.99,289.27 1014.30,288.21 1014.62,289.14 1014.94,284.23 1015.26,284.32 1015.58,289.89 1015.89,287.41 1016.21,283.68 1016.53,290.03 1016.85,283.19 1017.17,286.50 1017.48,288.16 1017.80,284.18 1018.12,285.95 1018.44,286.02 1018.76,288.07 1019.07,286.75 1019.39,288.67 1019.71,289.75 1020.03,289.08 1020.35,288.59 1020.66,284.74 1020.98,285.63 1021.30,290.98 1021.62,288.51 1021.94,289.15 1022.26,288.62 1022.57,287.47 1022.89,287.08 1023.21,289.25 1023.53,287.30 1023.85,291.48 1024.16,288.99 1024.48,290.65 1024.80,289.91 1025.12,290.35 1025.44,290.31 1025.75,288.26 1026.07,291.14 1026.39,291.29 1026.71,288.37 1027.03,288.73 1027.34,289.82 1027.66,288.69 1027.98,288.15 1028.30,289.47 1028.62,287.63 1028.94,290.03 1029.25,290.71 1029.57,289.40 1029.89,288.44 1030.21,290.26 1030.53,291.13 1030.84,288.94 1031.16,291.09 1031.48,288.52 1031.80,291.31 1032.12,289.72 1032.43,291.06 1032.75,288.95 1033.07,290.10 1033.39,290.88 1033.71,290.33 1034.02,290.46 1034.34,288.03 1034.66,291.53 1034.98,291.55 1035.30,288.12 1035.61,289.13 1035.93,291.22 1036.25,291.40 1036.57,290.97 1036.89,290.51 1037.21,289.44 1037.52,289.70 1037.84,291.52 1038.16,290.58 1038.48,288.80 1038.80,290.03 1039.11,290.31 1039.43,289.57 1039.75,289.42 1040.07,289.19 1040.39,289.94 1040.70,291.08 1041.02,291.81 1041.34,289.57 1041.66,289.83 1041.98,290.80 1042.29,290.19 1042.61,290.04 1042.93,291.62 1043.25,289.79 1043.57,290.71 1043.88,292.11 1044.20,291.75 1044.52,289.44 1044.84,291.96 1045.16,290.67 1045.48,290.77 1045.79,289.86 1046.11,291.09 1046.43,291.68 1046.75,291.16 1047.07,291.94 1047.38,291.62 1047.70,291.53 1048.02,292.27 1048.34,291.14 1048.66,291.24 1048.97,291.70 1049.29,289.75 1049.61,291.74 1049.93,291.51 1050.25,292.00 1050.56,290.18 1050.88,291.10 1051.20,291.76 1051.52,291.43 1051.84,290.23 1052.15,290.69 1052.47,290.83 1052.79,290.24 1053.11,290.23 1053.43,290.84 1053.75,291.08 1054.06,292.40 1054.38,292.05 1054.70,291.67 1055.02,291.37 1055.34,290.82 1055.65,290.18 1055.97,292.30 1056.29,290.27 1056.61,292.11 1056.93,291.53 1057.24,292.43 1057.56,291.68 1057.88,291.95 1058.20,291.93 1058.52,291.81 1058.83,290.43 1059.15,292.11 1059.47,291.13 1059.79,291.01 1060.11,290.76 1060.42,292.07 1060.74,291.36 1061.06,291.57 1061.38,291.45 1061.70,291.74 1062.02,291.62 1062.33,291.59 1062.65,291.52 1062.97,291.43 1063.29,292.54 1063.61,291.61 1063.92,291.22 1064.24,291.82 1064.56,291.24 1064.88,291.31 1065.20,292.52 1065.51,291.23 1065.83,291.93 1066.15,291.58 1066.47,291.21 1066.79,291.19 1067.10,291.93 1067.42,291.88 1067.74,291.57 1068.06,292.18 1068.38,291.78 1068.70,291.40 1069.01,291.02 1069.33,291.33 1069.65,291.64 1069.97,291.36 1070.29,291.98 1070.60,292.04 1070.92,291.41 1071.24,292.53 1071.56,290.96 1071.88,292.52 1072.19,292.56 1072.51,290.91 1072.83,291.40 1073.15,290.94 1073.47,291.49 1073.78,291.35 1074.10,291.36 1074.42,291.41 1074.74,291.33 1075.06,291.81 1075.37,291.23 1075.69,291.45 1076.01,291.16 1076.33,291.39 1076.65,292.10 1076.97,292.07 1077.28,291.50 1077.60,292.54 1077.92,292.56 1078.24,291.22 1078.56,291.04 1078.87,292.62 1079.19,291.62 1079.51,290.95 1079.83,291.44 1080.15,291.49 1080.46,291.94 1080.78,292.65 1081.10,292.45 1081.42,292.51 1081.74,292.48 1082.05,291.96 1082.37,291.69 1082.69,292.58 1083.01,291.47 1083.33,291.46 1083.64,291.63 1083.96,291.91 1084.28,292.25 1084.60,291.87 1084.92,292.65 1085.24,292.00 1085.55,292.17 1085.87,292.41 1086.19,292.15 1086.51,292.09 1086.83,291.98 1087.14,292.46 1087.46,292.11 1087.78,291.69 1088.10,292.08 1088.42,291.20 1088.73,291.50 1089.05,292.60 1089.37,291.60 1089.69,292.18 1090.01,291.18 1090.32,291.77 1090.64,292.04 1090.96,292.13 1091.28,291.79 1091.60,291.63 1091.91,292.17 1092.23,292.07 1092.23,290.05 1092.39,288.70 1092.55,291.48 1092.55,290.50 1092.87,292.66 1093.19,291.50 1093.51,291.68 1093.82,291.45 1094.14,291.71 1094.46,291.97 1094.78,292.08 1095.10,292.61 1095.41,292.30 1095.73,292.45 1096.05,292.57 1096.37,292.92 1096.69,292.65 1097.00,293.00 1097.32,292.83 1097.64,292.76 1097.96,292.60 1098.28,292.81 1098.59,292.88 1098.91,292.95 1099.23,292.86 1099.55,292.84 1099.87,292.91 1100.18,292.55 1100.50,292.99 1100.82,292.82 1101.14,292.75 1101.46,292.77 1101.78,293.03 1102.09,292.61 1102.41,292.69 1102.73,292.66 1103.05,292.57 1103.37,292.64 1103.68,292.78 1104.00,292.86 1104.32,292.93 1104.64,292.77 1104.96,292.82 1105.27,292.70 1105.59,292.75 1105.91,292.98 1106.23,292.92 1106.55,292.73 1106.86,292.71 1107.18,292.77 1107.50,292.56 1107.82,292.75 1108.14,292.92 1108.46,292.60 1108.77,292.61 1109.09,292.65 1109.41,292.72 1109.73,292.87 1110.05,292.67 1110.36,292.69 1110.68,292.75 1111.00,292.99 1111.32,292.95 1111.64,292.88 1111.95,292.90 1112.27,292.80 1112.59,292.75 1112.91,293.02 1113.23,292.93 1113.54,292.61 1113.86,292.97 1114.18,292.99 1114.50,292.63 1114.82,292.82 1115.13,292.64 1115.45,292.68 1115.77,292.81 1116.09,292.69 1116.41,292.97 1116.73,292.91 1117.04,292.94 1117.36,292.63 1117.68,292.96 1118.00,292.89 1118.32,292.99 1118.63,293.01 1118.95,292.86 1119.27,292.83 1119.59,292.87 1119.91,292.86 1120.22,292.55 1120.54,292.77 1120.86,292.69 1121.18,292.68 1121.50,292.62 1121.81,292.64 1122.13,292.81 1122.45,292.63 1122.77,292.95 1123.09,292.77 1123.40,292.77 1123.72,292.95 1124.04,292.82" fill="none" stroke="#3535FF" stroke-width=".6" stroke-linejoin="bevel"/></g><g font-family="Liberation Sans"><path d="M414.0 443 V626" stroke="#A0A0A0" stroke-width="1.2"/><path d="M411.5 618.0H414.0" stroke="#888" stroke-width=".8"/><text x="410.5" y="620.0" text-anchor="end" font-size="5.5" fill="#555">0,0</text><path d="M411.5 607.0H414.0" stroke="#888" stroke-width=".8"/><text x="410.5" y="609.0" text-anchor="end" font-size="5.5" fill="#555">0,1</text><path d="M411.5 596.0H414.0" stroke="#888" stroke-width=".8"/><text x="410.5" y="598.0" text-anchor="end" font-size="5.5" fill="#555">0,2</text><path d="M411.5 585.0H414.0" stroke="#888" stroke-width=".8"/><text x="410.5" y="587.0" text-anchor="end" font-size="5.5" fill="#555">0,3</text><path d="M411.5 574.0H414.0" stroke="#888" stroke-width=".8"/><text x="410.5" y="576.0" text-anchor="end" font-size="5.5" fill="#555">0,4</text><path d="M411.5 563.0H414.0" stroke="#888" stroke-width=".8"/><text x="410.5" y="565.0" text-anchor="end" font-size="5.5" fill="#555">0,5</text><path d="M411.5 552.0H414.0" stroke="#888" stroke-width=".8"/><text x="410.5" y="554.0" text-anchor="end" font-size="5.5" fill="#555">0,6</text><path d="M411.5 541.0H414.0" stroke="#888" stroke-width=".8"/><text x="410.5" y="543.0" text-anchor="end" font-size="5.5" fill="#555">0,7</text><path d="M411.5 530.0H414.0" stroke="#888" stroke-width=".8"/><text x="410.5" y="532.0" text-anchor="end" font-size="5.5" fill="#555">0,8</text><path d="M411.5 519.0H414.0" stroke="#888" stroke-width=".8"/><text x="410.5" y="521.0" text-anchor="end" font-size="5.5" fill="#555">0,9</text><path d="M411.5 508.0H414.0" stroke="#888" stroke-width=".8"/><text x="410.5" y="510.0" text-anchor="end" font-size="5.5" fill="#555">1,0</text><path d="M411.5 497.0H414.0" stroke="#888" stroke-width=".8"/><text x="410.5" y="499.0" text-anchor="end" font-size="5.5" fill="#555">1,1</text><path d="M411.5 486.0H414.0" stroke="#888" stroke-width=".8"/><text x="410.5" y="488.0" text-anchor="end" font-size="5.5" fill="#555">1,2</text><path d="M411.5 475.0H414.0" stroke="#888" stroke-width=".8"/><text x="410.5" y="477.0" text-anchor="end" font-size="5.5" fill="#555">1,3</text><path d="M411.5 464.0H414.0" stroke="#888" stroke-width=".8"/><text x="410.5" y="466.0" text-anchor="end" font-size="5.5" fill="#555">1,4</text><path d="M411.5 453.0H414.0" stroke="#888" stroke-width=".8"/><text x="410.5" y="455.0" text-anchor="end" font-size="5.5" fill="#555">1,5</text><path d="M418.5 623 V443 H716" fill="none" stroke="#A8A8A8" stroke-width="1.3"/><path d="M418.5 623 H716" stroke="#A8A8A8" stroke-width="1.2"/><path d="M418.5 618 H716" stroke="#D0D0D0" stroke-width=".7"/><path d="M418.5 627.7 H716" stroke="#A0A0A0" stroke-width="1.2"/><path d="M418.5 625.2 V630.2M716 625.2 V630.2" stroke="#707070" stroke-width="1"/><text x="418.5" y="635.7" text-anchor="middle" font-size="5.5" fill="#555">0</text><text x="458.0" y="635.7" text-anchor="middle" font-size="5.5" fill="#555">200</text><text x="497.5" y="635.7" text-anchor="middle" font-size="5.5" fill="#555">400</text><text x="537.0" y="635.7" text-anchor="middle" font-size="5.5" fill="#555">600</text><text x="576.5" y="635.7" text-anchor="middle" font-size="5.5" fill="#555">800</text><text x="616.0" y="635.7" text-anchor="middle" font-size="5.5" fill="#555">1000</text><text x="655.5" y="635.7" text-anchor="middle" font-size="5.5" fill="#555">1200</text><text x="695.0" y="635.7" text-anchor="middle" font-size="5.5" fill="#555">1400</text><text x="399" y="437" font-size="5.5" fill="#555">v mm/s</text><text x="702" y="639" font-size="5.5" fill="#555">f Hz</text><polyline points="418.50,608.32 418.80,605.57 418.89,578.40 419.09,607.78 419.09,538.80 419.29,582.36 419.39,609.68 419.69,605.21 419.98,611.65 420.28,607.20 420.57,611.36 420.87,600.57 421.17,606.60 421.26,572.90 421.46,614.10 421.46,527.80 421.66,577.41 421.76,612.31 422.06,612.04 422.35,610.28 422.65,605.89 422.65,538.25 422.85,458.50 422.94,607.25 423.04,546.23 423.24,607.17 423.44,545.40 423.54,610.77 423.63,472.80 423.83,600.13 423.83,552.66 424.13,604.26 424.23,604.25 424.43,611.80 424.43,590.50 424.62,605.62 424.72,613.29 425.02,607.62 425.31,607.03 425.61,601.87 425.91,612.52 426.20,605.68 426.50,594.59 426.80,597.80 427.09,597.66 427.39,600.40 427.68,591.59 427.78,604.80 427.98,601.13 427.98,591.60 428.18,606.12 428.28,602.79 428.57,607.00 428.57,598.31 428.77,596.00 428.87,597.71 428.97,608.10 429.17,596.73 429.46,597.61 429.76,599.59 430.05,600.75 430.35,602.12 430.65,606.07 430.94,610.66 431.14,611.40 431.24,604.71 431.34,604.80 431.54,612.06 431.54,605.61 431.83,611.85 432.13,608.19 432.42,613.24 432.72,609.20 433.02,608.75 433.31,609.62 433.61,605.05 433.90,604.93 434.20,612.83 434.50,602.63 434.79,612.36 435.09,603.09 435.39,605.80 435.68,604.78 435.98,612.48 436.27,617.66 436.57,612.57 436.87,617.36 437.16,614.94 437.46,617.31 437.76,613.94 438.05,615.71 438.35,617.20 438.64,617.50 438.94,614.82 439.24,617.64 439.53,617.38 439.83,615.95 440.13,613.67 440.42,615.59 440.72,617.24 441.01,613.04 441.31,617.44 441.61,617.67 441.90,617.27 442.20,616.58 442.50,617.65 442.79,617.50 442.99,604.25 443.09,616.92 443.19,590.50 443.38,615.87 443.38,605.62 443.68,617.57 443.98,616.95 444.27,613.30 444.57,612.38 444.87,615.30 445.16,615.04 445.46,615.79 445.75,617.56 446.05,617.66 446.35,617.67 446.64,613.11 446.94,614.97 447.24,612.57 447.53,617.67 447.83,615.44 447.93,613.05 448.12,616.39 448.12,608.10 448.32,613.54 448.42,614.74 448.72,617.11 449.01,612.18 449.31,617.64 449.61,616.03 449.90,614.68 450.20,613.21 450.50,614.68 450.79,614.95 451.09,614.21 451.38,613.07 451.68,616.99 451.98,615.09 452.27,613.21 452.57,613.50 452.87,616.71 453.16,614.23 453.46,613.57 453.75,615.87 454.05,615.52 454.35,616.87 454.64,615.80 454.94,615.63 455.24,617.63 455.53,615.42 455.83,612.24 456.12,613.41 456.42,614.75 456.72,616.84 457.01,614.70 457.31,615.81 457.61,616.60 457.80,604.25 457.90,613.80 458.00,590.50 458.20,617.63 458.20,605.62 458.49,614.57 458.79,617.67 459.09,615.68 459.38,616.40 459.68,617.38 459.78,612.50 459.98,614.99 459.98,607.00 460.17,613.05 460.27,616.31 460.57,615.59 460.86,613.01 461.16,617.31 461.46,617.67 461.75,617.17 462.05,615.14 462.35,617.44 462.64,617.51 462.74,612.50 462.94,613.16 462.94,607.00 463.13,613.05 463.23,615.27 463.53,616.60 463.83,613.30 464.12,617.08 464.42,615.23 464.72,617.45 465.01,616.65 465.31,614.10 465.60,613.07 465.70,612.50 465.90,613.41 465.90,607.00 466.10,613.05 466.20,616.86 466.49,615.80 466.79,617.12 467.08,617.57 467.38,616.31 467.68,613.82 467.97,613.71 468.27,614.89 468.57,612.71 468.86,617.25 469.16,617.51 469.45,616.55 469.75,617.25 470.05,617.42 470.34,616.73 470.64,615.52 470.94,616.33 471.23,617.12 471.53,613.80 471.82,612.37 472.12,616.54 472.42,617.64 472.71,617.66 473.01,613.48 473.31,617.66 473.60,614.91 473.90,615.88 474.19,617.14 474.49,614.22 474.79,617.67 475.08,617.57 475.38,616.53 475.68,617.67 475.97,613.88 476.27,617.36 476.56,617.56 476.86,617.66 477.16,615.49 477.45,616.57 477.75,615.49 478.05,615.31 478.34,614.08 478.64,612.62 478.94,615.09 479.23,617.45 479.53,616.43 479.82,617.49 480.12,617.67 480.42,616.44 480.71,614.86 481.01,617.49 481.31,617.26 481.60,617.01 481.90,615.00 482.19,616.18 482.49,615.59 482.79,614.52 483.08,616.82 483.38,614.22 483.68,613.15 483.97,617.63 484.27,612.89 484.56,614.80 484.86,617.58 485.16,616.54 485.45,615.52 485.75,613.12 486.05,616.89 486.34,615.89 486.64,613.42 486.93,614.18 487.23,612.77 487.53,616.49 487.82,615.34 488.12,617.44 488.42,614.80 488.71,613.99 489.01,615.41 489.30,614.84 489.60,617.42 489.90,613.22 490.19,612.38 490.49,612.42 490.78,616.08 491.08,614.23 491.38,617.11 491.67,613.12 491.97,613.64 492.27,617.00 492.56,617.63 492.86,616.60 493.15,616.00 493.45,614.42 493.75,616.36 494.04,617.67 494.34,614.07 494.64,617.65 494.93,614.15 495.23,617.51 495.52,617.05 495.82,614.26 496.12,617.56 496.41,617.55 496.71,616.20 497.01,614.79 497.30,613.79 497.60,615.06 497.89,612.75 498.19,616.34 498.49,612.72 498.78,617.63 499.08,617.40 499.38,616.14 499.67,617.21 499.97,614.75 500.26,615.43 500.56,616.17 500.86,613.76 501.15,615.95 501.45,617.14 501.75,616.87 502.04,613.74 502.34,613.21 502.63,617.43 502.93,613.69 503.23,612.51 503.52,616.16 503.82,615.86 504.12,617.45 504.41,616.09 504.71,616.28 505.00,615.66 505.30,617.67 505.60,612.50 505.89,616.21 506.19,616.79 506.19,613.05 506.39,608.10 506.49,614.14 506.59,613.54 506.78,615.93 507.08,616.34 507.38,615.04 507.67,617.65 507.97,616.07 508.26,616.73 508.56,612.63 508.86,612.98 509.15,617.27 509.45,616.44 509.75,617.58 510.04,616.64 510.34,614.01 510.63,613.21 510.93,616.42 511.23,617.12 511.52,617.47 511.82,615.57 512.12,612.96 512.41,617.58 512.71,614.33 513.00,617.67 513.30,617.46 513.60,617.39 513.89,615.07 514.19,617.10 514.49,616.98 514.78,615.56 515.08,617.61 515.37,614.73 515.67,617.59 515.97,616.24 516.26,617.32 516.56,617.45 516.86,616.12 517.15,616.62 517.45,616.89 517.74,616.73 518.04,616.13 518.34,617.53 518.63,617.44 518.93,615.48 519.23,615.43 519.52,616.13 519.82,613.68 520.11,615.61 520.41,613.63 520.71,617.37 521.00,614.65 521.00,613.05 521.20,608.10 521.30,614.06 521.40,613.54 521.60,613.19 521.89,617.12 522.19,617.12 522.48,612.99 522.78,617.41 523.08,612.19 523.37,613.34 523.67,617.57 523.97,617.35 524.26,614.77 524.56,617.30 524.85,617.62 525.15,613.86 525.45,616.69 525.74,614.24 526.04,617.58 526.34,616.78 526.63,615.09 526.93,617.67 526.93,610.30 527.12,602.60 527.22,617.45 527.32,611.07 527.52,615.11 527.82,613.10 528.11,612.51 528.41,617.60 528.71,616.26 529.00,614.51 529.30,616.28 529.59,615.08 529.89,617.47 530.19,617.64 530.48,617.61 530.78,617.66 530.88,610.30 531.08,616.00 531.08,602.60 531.27,611.07 531.37,616.21 531.67,615.89 531.96,617.55 532.26,617.48 532.56,617.44 532.85,613.79 533.15,612.28 533.45,612.94 533.74,617.62 534.04,617.65 534.33,612.69 534.63,616.50 534.93,614.45 535.22,617.08 535.52,616.47 535.82,616.21 536.11,616.65 536.21,584.45 536.41,615.68 536.41,550.90 536.61,587.80 536.70,617.67 537.00,614.97 537.30,613.75 537.59,617.49 537.89,616.54 538.18,614.66 538.48,616.77 538.78,617.46 538.78,613.60 538.98,609.20 539.07,617.52 539.17,614.04 539.37,616.23 539.67,617.67 539.96,613.28 540.26,614.13 540.56,614.94 540.85,613.60 541.15,615.49 541.44,616.77 541.74,615.69 542.04,616.27 542.33,612.36 542.63,614.11 542.92,617.30 543.22,613.10 543.52,614.62 543.81,614.34 544.11,614.02 544.41,616.77 544.70,614.70 544.70,613.25 544.90,611.40 545.00,613.41 545.10,615.03 545.29,615.01 545.59,614.43 545.89,614.45 546.18,616.76 546.48,614.80 546.78,617.64 547.07,617.03 547.37,616.46 547.66,617.67 547.96,616.97 548.26,615.43 548.55,615.53 548.85,617.37 549.15,612.76 549.44,615.23 549.74,617.04 550.03,615.28 550.33,615.89 550.63,616.11 550.92,616.84 551.22,612.17 551.52,615.40 551.81,614.97 552.11,614.48 552.40,612.39 552.70,617.67 553.00,615.59 553.29,614.67 553.59,617.31 553.89,616.78 554.18,617.66 554.48,617.46 554.77,616.89 555.07,617.62 555.37,617.32 555.66,613.16 555.96,616.01 556.26,616.25 556.55,613.05 556.55,612.53 556.75,608.10 556.85,615.90 556.95,613.54 557.14,612.22 557.44,615.43 557.74,614.07 558.03,617.64 558.33,615.71 558.63,614.50 558.92,617.66 559.22,612.91 559.51,617.53 559.81,616.45 560.11,617.51 560.40,616.32 560.70,615.62 561.00,617.65 561.29,612.76 561.59,616.70 561.88,616.14 562.18,615.70 562.48,616.93 562.77,617.22 563.07,615.31 563.37,615.94 563.66,617.23 563.96,614.85 564.25,617.19 564.55,617.67 564.85,617.34 565.14,617.66 565.44,617.54 565.74,614.54 566.03,616.83 566.33,613.24 566.62,614.59 566.92,617.66 567.22,612.29 567.51,612.76 567.81,617.64 568.11,613.16 568.40,616.66 568.70,616.42 569.00,612.46 569.29,617.34 569.59,616.16 569.88,612.84 570.18,614.80 570.48,616.46 570.77,612.40 571.07,614.00 571.37,615.67 571.66,617.60 571.96,615.53 572.25,616.53 572.55,617.44 572.85,617.66 573.14,616.14 573.44,617.58 573.74,616.59 574.03,615.22 574.33,616.53 574.33,595.45 574.52,572.90 574.62,617.29 574.72,597.71 574.92,615.81 575.22,616.70 575.51,614.34 575.81,616.12 576.11,612.20 576.40,612.68 576.70,614.70 576.99,617.36 577.29,617.60 577.59,613.29 577.88,614.29 578.18,615.52 578.48,616.96 578.77,617.26 579.07,615.09 579.26,611.40 579.36,615.91 579.46,604.80 579.66,615.74 579.66,612.06 579.96,615.47 580.25,614.55 580.55,617.47 580.85,617.33 581.14,612.39 581.44,613.06 581.73,613.42 582.03,617.66 582.33,617.65 582.62,617.27 582.92,616.68 583.22,615.53 583.51,617.61 583.81,616.06 584.10,617.64 584.40,617.63 584.70,615.15 584.99,616.00 585.29,615.48 585.59,616.90 585.88,616.41 586.18,617.43 586.18,611.40 586.38,604.80 586.47,617.02 586.57,612.06 586.77,614.62 587.07,613.80 587.36,617.64 587.66,617.59 587.96,614.07 588.25,615.53 588.55,614.42 588.84,617.42 589.14,616.68 589.44,617.30 589.73,614.06 590.03,616.92 590.33,615.32 590.62,612.29 590.92,617.09 591.21,616.01 591.51,614.61 591.81,613.01 592.10,616.66 592.40,616.92 592.70,617.62 592.99,613.46 593.29,617.64 593.58,617.63 593.88,615.92 594.18,616.38 594.47,615.09 594.77,617.18 595.07,614.36 595.36,617.64 595.66,617.42 595.95,615.26 596.25,617.63 596.55,617.16 596.84,614.78 597.14,615.02 597.43,617.23 597.73,617.56 598.03,616.97 598.32,614.77 598.62,616.93 598.92,617.59 599.21,614.90 599.51,615.89 599.81,613.03 600.00,609.20 600.10,612.81 600.20,600.40 600.40,613.08 600.40,610.08 600.69,616.61 600.99,614.12 601.29,617.16 601.58,617.12 601.88,616.79 602.17,612.87 602.47,613.27 602.77,617.33 603.06,616.95 603.36,616.93 603.66,616.94 603.95,616.81 604.25,616.84 604.55,617.46 604.84,615.92 605.14,614.18 605.43,616.06 605.73,613.82 606.03,615.93 606.32,617.50 606.62,614.50 606.91,613.40 607.21,617.23 607.51,617.67 607.80,616.21 608.10,616.04 608.40,615.90 608.69,612.53 608.99,615.34 609.28,614.11 609.58,617.65 609.88,616.03 610.17,614.25 610.47,617.63 610.77,617.63 611.06,614.68 611.36,613.22 611.65,617.63 611.95,615.46 612.25,617.56 612.54,614.61 612.84,615.35 613.14,617.34 613.43,617.40 613.73,614.45 614.02,616.17 614.32,614.45 614.62,616.81 614.91,617.04 615.21,612.51 615.51,615.18 615.80,616.33 616.10,616.08 616.39,614.81 616.69,614.91 616.99,613.07 617.28,616.74 617.58,613.92 617.88,615.23 618.17,613.66 618.47,614.10 618.76,613.85 619.06,613.33 619.36,612.62 619.65,615.42 619.95,616.16 620.25,614.90 620.54,614.13 620.84,616.69 621.13,616.70 621.43,617.55 621.73,614.65 622.02,612.27 622.32,616.89 622.62,617.52 622.91,617.44 623.21,616.68 623.50,617.20 623.80,612.50 624.10,617.65 624.39,617.15 624.69,617.60 624.99,615.36 625.28,614.36 625.58,617.49 625.88,617.65 626.17,616.51 626.47,615.79 626.76,613.12 627.06,617.66 627.36,617.61 627.65,617.48 627.65,615.25 627.85,612.50 627.95,617.41 628.05,615.52 628.25,617.37 628.54,614.84 628.84,615.72 629.13,617.39 629.43,617.48 629.73,617.24 630.02,617.51 630.32,614.51 630.62,617.14 630.91,616.02 631.21,614.00 631.50,616.41 631.80,617.30 632.10,613.34 632.39,613.07 632.69,617.03 632.99,616.02 633.28,612.63 633.58,616.39 633.87,617.40 634.17,617.66 634.47,612.73 634.76,614.14 635.06,616.85 635.36,616.14 635.65,616.21 635.95,617.26 636.24,612.28 636.54,615.29 636.84,617.36 637.13,617.67 637.43,616.44 637.73,616.91 638.02,614.18 638.32,614.87 638.61,615.65 638.91,617.53 639.21,617.53 639.50,617.10 639.80,617.30 640.10,613.51 640.39,616.20 640.69,615.44 640.98,612.25 641.28,617.28 641.58,616.10 641.87,617.55 642.17,614.41 642.47,617.67 642.76,613.96 643.06,613.73 643.35,613.95 643.45,610.30 643.65,617.63 643.65,602.60 643.85,611.07 643.95,617.27 644.24,614.85 644.54,617.62 644.84,616.40 645.13,616.46 645.43,612.65 645.72,615.78 646.02,613.63 646.32,617.16 646.61,614.24 646.91,616.71 647.21,613.05 647.50,617.62 647.80,613.91 648.09,617.43 648.39,616.05 648.69,616.15 648.98,617.53 649.28,613.86 649.58,617.14 649.87,617.14 650.17,617.64 650.46,617.16 650.76,616.47 651.06,614.86 651.35,616.96 651.65,615.07 651.95,617.61 652.24,616.82 652.54,616.50 652.83,612.53 653.13,613.88 653.43,615.32 653.72,617.67 654.02,616.89 654.32,614.90 654.61,617.36 654.91,615.92 655.20,616.52 655.50,617.67 655.80,612.26 656.09,614.15 656.39,617.43 656.68,615.58 656.98,617.21 657.28,616.89 657.28,612.50 657.48,607.00 657.57,616.07 657.67,613.05 657.87,617.18 658.17,617.04 658.46,616.82 658.76,615.23 659.06,617.31 659.35,617.45 659.65,614.73 659.94,617.07 660.24,612.76 660.54,615.93 660.83,614.79 661.13,617.07 661.42,613.91 661.72,617.62 662.02,617.56 662.31,617.62 662.61,615.14 662.91,614.91 663.20,617.49 663.20,612.50 663.40,607.00 663.50,616.78 663.60,613.05 663.80,613.82 664.09,615.74 664.39,617.63 664.68,617.39 664.98,617.53 665.28,617.59 665.57,616.76 665.87,617.64 666.16,613.01 666.46,616.67 666.76,616.23 667.05,615.37 667.15,614.15 667.35,614.44 667.35,610.30 667.55,614.53 667.65,613.96 667.94,616.85 668.24,617.07 668.54,616.74 668.83,617.67 669.13,616.79 669.42,614.98 669.72,612.37 670.02,614.24 670.31,615.27 670.61,615.63 670.90,617.67 671.20,617.07 671.50,617.03 671.79,615.34 672.09,617.61 672.39,616.89 672.68,616.24 672.98,614.25 673.27,613.92 673.57,615.61 673.87,617.53 674.16,614.44 674.46,613.19 674.76,616.02 675.05,616.99 675.35,616.29 675.64,617.56 675.94,614.87 676.24,612.31 676.53,616.21 676.83,614.86 677.03,614.15 677.13,613.83 677.23,610.30 677.42,617.46 677.42,614.53 677.72,612.76 678.01,615.51 678.31,617.45 678.61,617.63 678.90,617.34 679.20,615.84 679.50,615.00 679.79,617.07 680.09,612.92 680.38,616.95 680.68,616.49 680.98,617.59 681.27,612.46 681.57,617.57 681.87,613.17 682.16,616.05 682.46,615.94 682.75,615.94 682.95,614.15 683.05,617.29 683.15,610.30 683.35,614.53 683.35,613.12 683.64,612.26 683.94,613.99 684.24,615.68 684.53,617.59 684.83,613.93 685.12,617.21 685.42,613.24 685.72,617.35 686.01,615.86 686.31,613.87 686.61,617.48 686.90,616.02 687.20,617.64 687.50,617.66 687.79,617.49 688.09,612.31 688.38,612.82 688.68,615.29 688.98,617.15 689.27,615.19 689.57,614.68 689.87,616.87 690.16,615.74 690.46,614.12 690.75,617.67 691.05,617.45 691.35,616.47 691.64,617.56 691.94,616.85 692.24,615.89 692.53,617.50 692.83,616.18 693.12,617.29 693.42,615.90 693.72,617.06 694.01,615.41 694.31,617.66 694.61,615.19 694.90,617.55 695.20,612.61 695.49,615.69 695.79,616.46 696.09,616.74 696.38,615.53 696.68,615.06 696.98,614.51 697.27,614.56 697.57,616.37 697.86,612.23 698.16,613.81 698.46,613.65 698.75,616.75 699.05,616.63 699.35,615.91 699.64,613.16 699.94,616.15 700.23,616.15 700.53,616.64 700.83,613.17 701.12,617.10 701.42,617.65 701.72,614.77 702.01,613.21 702.31,614.72 702.60,615.71 702.70,615.25 702.90,614.56 702.90,612.50 703.10,615.52 703.20,617.16 703.49,615.73 703.79,617.64 704.09,617.58 704.38,616.57 704.68,616.28 704.97,616.80 705.27,617.66 705.57,615.01 705.86,616.15 706.16,617.36 706.46,617.15 706.75,616.81 707.05,617.36 707.34,617.64 707.64,613.10 707.94,612.53 708.23,615.23 708.53,613.54 708.83,616.69 709.12,614.10 709.42,617.40 709.71,614.60 710.01,615.90 710.31,613.18 710.60,617.62 710.90,614.22 711.19,617.59 711.49,616.08 711.79,612.70 712.08,617.67 712.38,617.34 712.68,617.18 712.97,617.09 713.27,617.65 713.57,613.26 713.86,614.01 714.16,616.80 714.45,616.97 714.75,615.78" fill="none" stroke="#3535FF" stroke-width=".6" stroke-linejoin="bevel"/></g><g font-family="Liberation Sans"><path d="M787.5 445.7 V622.7" stroke="#A0A0A0" stroke-width="1.2"/><path d="M785 616.5H787.5" stroke="#888" stroke-width=".8"/><text x="784" y="618.5" text-anchor="end" font-size="5.5" fill="#555">0,0</text><path d="M785 604.2H787.5" stroke="#888" stroke-width=".8"/><text x="784" y="606.2" text-anchor="end" font-size="5.5" fill="#555">0,1</text><path d="M785 592.0H787.5" stroke="#888" stroke-width=".8"/><text x="784" y="594.0" text-anchor="end" font-size="5.5" fill="#555">0,2</text><path d="M785 579.8H787.5" stroke="#888" stroke-width=".8"/><text x="784" y="581.8" text-anchor="end" font-size="5.5" fill="#555">0,3</text><path d="M785 567.5H787.5" stroke="#888" stroke-width=".8"/><text x="784" y="569.5" text-anchor="end" font-size="5.5" fill="#555">0,4</text><path d="M785 555.2H787.5" stroke="#888" stroke-width=".8"/><text x="784" y="557.2" text-anchor="end" font-size="5.5" fill="#555">0,5</text><path d="M785 543.0H787.5" stroke="#888" stroke-width=".8"/><text x="784" y="545.0" text-anchor="end" font-size="5.5" fill="#555">0,6</text><path d="M785 530.8H787.5" stroke="#888" stroke-width=".8"/><text x="784" y="532.8" text-anchor="end" font-size="5.5" fill="#555">0,7</text><path d="M785 518.5H787.5" stroke="#888" stroke-width=".8"/><text x="784" y="520.5" text-anchor="end" font-size="5.5" fill="#555">0,8</text><path d="M785 506.2H787.5" stroke="#888" stroke-width=".8"/><text x="784" y="508.2" text-anchor="end" font-size="5.5" fill="#555">0,9</text><path d="M785 494.0H787.5" stroke="#888" stroke-width=".8"/><text x="784" y="496.0" text-anchor="end" font-size="5.5" fill="#555">1,0</text><path d="M785 481.8H787.5" stroke="#888" stroke-width=".8"/><text x="784" y="483.8" text-anchor="end" font-size="5.5" fill="#555">1,1</text><path d="M785 469.5H787.5" stroke="#888" stroke-width=".8"/><text x="784" y="471.5" text-anchor="end" font-size="5.5" fill="#555">1,2</text><path d="M785 457.2H787.5" stroke="#888" stroke-width=".8"/><text x="784" y="459.2" text-anchor="end" font-size="5.5" fill="#555">1,3</text><path d="M792 619.7 V445.7 H1130" fill="none" stroke="#A8A8A8" stroke-width="1.3"/><path d="M792 619.7 H1130" stroke="#A8A8A8" stroke-width="1.2"/><path d="M1130 445.7 V619.7" stroke="#A8A8A8" stroke-width="1.2"/><path d="M792 616.5 H1130" stroke="#D0D0D0" stroke-width=".7"/><path d="M792 624 H1130" stroke="#A0A0A0" stroke-width="1.2"/><path d="M792 621.5 V626.5M1130 621.5 V626.5" stroke="#707070" stroke-width="1"/><text x="792.0" y="632" text-anchor="middle" font-size="5.5" fill="#555">0</text><text x="848.2" y="632" text-anchor="middle" font-size="5.5" fill="#555">500</text><text x="904.4" y="632" text-anchor="middle" font-size="5.5" fill="#555">1000</text><text x="960.6" y="632" text-anchor="middle" font-size="5.5" fill="#555">1500</text><text x="1016.8" y="632" text-anchor="middle" font-size="5.5" fill="#555">2000</text><text x="1073.0" y="632" text-anchor="middle" font-size="5.5" fill="#555">2500</text><text x="1129.2" y="632" text-anchor="middle" font-size="5.5" fill="#555">3000</text><text x="770" y="440" font-size="5.5" fill="#555">v mm/s</text><text x="1112" y="635.5" font-size="5.5" fill="#555">f Hz</text><polyline points="792.00,611.51 792.34,610.51 792.67,610.70 793.01,613.66 793.35,611.08 793.46,612.21 793.69,612.82 793.69,607.92 793.91,612.64 794.02,613.36 794.36,612.20 794.70,614.46 795.03,611.73 795.37,612.98 795.71,612.97 796.05,613.40 796.38,612.48 796.72,614.03 797.06,610.31 797.40,611.57 797.40,561.99 797.62,507.48 797.73,611.89 797.84,567.44 798.07,611.82 798.41,610.67 798.74,612.27 799.08,613.85 799.42,614.63 799.76,612.64 800.09,613.07 800.43,613.46 800.77,611.88 801.10,612.98 801.44,613.42 801.78,612.93 802.12,610.91 802.45,612.70 802.79,612.57 803.02,547.90 803.13,614.99 803.24,479.30 803.46,611.83 803.46,554.76 803.80,612.40 804.14,610.22 804.48,613.31 804.81,611.62 805.15,612.62 805.49,610.76 805.83,612.18 806.16,613.91 806.50,610.99 806.84,611.57 807.17,612.99 807.51,613.91 807.85,614.52 808.19,610.58 808.52,614.65 808.64,591.39 808.86,611.34 808.86,566.27 809.08,593.90 809.20,613.53 809.53,611.31 809.87,612.86 810.21,612.22 810.55,613.57 810.88,612.90 811.22,610.63 811.56,611.35 811.89,613.59 812.23,612.24 812.57,613.11 812.91,610.34 813.24,611.61 813.58,611.84 813.92,613.20 814.26,613.81 814.26,546.06 814.48,475.62 814.59,611.29 814.70,553.11 814.93,611.12 815.27,613.01 815.60,614.12 815.94,610.77 816.28,611.95 816.62,611.32 816.95,611.36 817.29,612.19 817.63,613.05 817.96,611.34 818.30,611.61 818.64,611.94 818.98,613.45 819.31,612.54 819.65,611.63 819.88,605.48 819.99,611.28 820.10,594.45 820.32,612.41 820.32,606.58 820.66,610.99 821.00,611.80 821.34,611.13 821.67,610.07 822.01,612.39 822.35,612.22 822.69,611.62 823.02,611.42 823.36,613.02 823.70,611.65 824.03,612.40 824.37,611.40 824.71,611.54 825.05,614.60 825.38,612.19 825.50,609.76 825.72,612.57 825.72,603.02 825.94,610.44 826.06,613.63 826.39,613.42 826.73,614.62 827.07,613.90 827.41,614.62 827.74,612.96 828.08,612.00 828.42,611.86 828.75,613.91 829.09,613.28 829.43,612.35 829.77,614.22 830.10,613.51 830.44,612.91 830.78,610.94 831.12,613.44 831.12,612.06 831.34,610.38 831.45,611.39 831.56,613.74 831.79,613.90 832.13,612.11 832.46,610.08 832.80,612.74 833.14,613.18 833.48,613.18 833.81,613.37 834.15,611.03 834.49,613.00 834.82,613.76 835.16,611.85 835.50,610.23 835.84,613.04 836.17,611.47 836.51,613.26 836.74,612.83 836.85,611.48 836.96,609.15 837.18,613.19 837.18,613.06 837.52,612.98 837.86,613.28 838.20,610.90 838.53,613.49 838.87,611.68 839.21,612.68 839.55,614.09 839.88,612.07 840.22,612.36 840.56,611.88 840.89,613.15 841.23,612.55 841.57,612.95 841.91,612.88 842.24,613.02 842.58,614.12 842.92,614.46 843.25,615.68 843.59,615.21 843.93,614.76 844.27,613.74 844.60,613.81 844.94,614.56 845.28,615.73 845.61,614.05 845.95,614.82 846.29,614.50 846.63,614.20 846.96,614.37 847.30,614.70 847.64,613.75 847.98,614.92 848.31,614.90 848.65,613.89 848.99,615.33 849.32,615.11 849.66,613.93 850.00,615.62 850.34,613.92 850.67,614.23 851.01,614.81 851.35,615.13 851.68,614.04 852.02,613.76 852.36,615.45 852.70,614.71 853.03,614.55 853.37,614.67 853.71,615.04 854.04,615.43 854.38,614.47 854.72,613.97 855.06,615.61 855.39,615.26 855.73,613.96 856.07,614.02 856.41,614.30 856.74,615.71 857.08,614.17 857.42,613.61 857.75,613.56 858.09,614.22 858.43,615.66 858.77,613.91 859.10,615.28 859.44,614.34 859.78,613.67 860.11,614.19 860.45,615.47 860.79,615.12 861.13,613.74 861.46,615.43 861.80,614.42 862.14,614.85 862.47,615.41 862.81,614.39 863.15,615.67 863.49,615.53 863.82,614.93 864.16,615.61 864.50,615.64 864.84,614.50 865.17,614.13 865.51,613.83 865.85,615.47 866.18,614.81 866.52,615.07 866.86,614.44 867.20,614.69 867.53,613.70 867.87,614.94 868.21,615.64 868.54,614.23 868.88,615.43 869.22,614.37 869.56,614.65 869.89,613.76 870.23,614.54 870.57,614.40 870.90,615.18 871.24,614.55 871.58,615.20 871.92,614.11 872.25,614.63 872.59,615.47 872.93,615.25 873.27,614.95 873.60,614.14 873.94,615.37 874.28,614.19 874.61,614.32 874.95,615.58 875.29,614.29 875.63,615.56 875.96,615.49 876.30,614.46 876.64,615.24 876.97,613.83 877.31,614.71 877.65,615.05 877.99,614.01 878.32,615.70 878.66,614.17 879.00,615.65 879.33,615.43 879.67,613.67 880.01,614.26 880.35,615.27 880.68,615.51 881.02,613.62 881.36,614.30 881.70,613.96 882.03,615.46 882.37,614.39 882.71,614.98 883.04,615.25 883.38,615.03 883.72,614.41 884.06,615.00 884.39,614.91 884.73,615.46 885.07,613.93 885.40,614.34 885.74,613.99 886.08,614.81 886.42,613.89 886.75,614.62 887.09,614.46 887.43,614.50 887.76,614.13 888.10,614.89 888.44,615.55 888.78,615.69 889.11,615.32 889.45,615.68 889.79,613.80 890.13,614.70 890.46,614.09 890.80,615.76 891.14,614.73 891.47,613.80 891.81,614.40 892.15,614.82 892.49,614.74 892.82,615.55 893.16,615.42 893.50,613.94 893.83,613.47 894.17,613.44 894.51,612.35 894.85,613.96 895.18,613.73 895.52,613.68 895.86,613.94 896.19,613.66 896.53,613.78 896.87,613.23 897.21,614.22 897.54,612.26 897.88,613.48 898.22,612.23 898.56,612.78 898.89,612.81 899.23,613.25 899.57,612.21 899.90,614.04 900.24,612.82 900.58,613.65 900.92,612.81 901.25,612.69 901.59,613.94 901.93,613.85 902.26,614.24 902.60,613.79 902.94,614.12 903.28,613.41 903.61,612.15 903.95,613.49 904.29,613.61 904.62,613.26 904.96,613.67 905.30,612.68 905.64,612.71 905.97,613.93 906.31,613.76 906.65,612.81 906.99,612.22 907.32,612.87 907.66,613.35 908.00,612.14 908.33,614.28 908.67,614.16 909.01,612.58 909.35,613.39 909.68,614.20 910.02,613.09 910.36,612.11 910.69,613.15 911.03,613.52 911.37,614.09 911.71,614.14 912.04,612.31 912.38,613.21 912.72,612.23 913.05,614.18 913.39,613.76 913.73,614.18 914.07,613.42 914.40,614.16 914.74,613.73 915.08,613.40 915.42,613.62 915.75,615.65 916.09,615.68 916.43,613.62 916.76,615.37 917.10,614.64 917.44,614.88 917.78,614.59 918.11,615.58 918.45,615.07 918.79,615.53 919.12,614.57 919.46,613.73 919.80,614.45 920.14,613.88 920.47,615.29 920.81,615.73 921.15,614.58 921.48,613.22 921.82,613.04 922.16,613.46 922.50,612.92 922.83,612.69 923.17,612.28 923.51,613.62 923.85,613.30 924.18,612.47 924.52,613.80 924.86,614.04 925.19,613.61 925.53,614.10 925.87,612.59 926.21,612.49 926.54,613.61 926.88,614.01 927.22,614.11 927.55,613.76 927.89,614.11 928.23,613.35 928.57,613.02 928.90,613.75 929.24,614.16 929.58,612.75 929.91,614.19 930.25,613.85 930.59,613.66 930.93,613.47 931.26,614.08 931.60,613.37 931.94,613.60 932.28,612.64 932.61,613.07 932.95,612.32 933.29,612.85 933.62,612.62 933.96,613.03 934.30,613.32 934.64,612.49 934.97,612.85 935.31,612.19 935.65,612.69 935.98,612.75 936.32,613.70 936.66,612.50 937.00,613.45 937.33,614.01 937.67,614.15 938.01,613.92 938.34,615.19 938.68,614.27 939.02,615.14 939.36,615.62 939.69,614.08 940.03,614.54 940.37,615.70 940.71,615.65 941.04,615.48 941.38,614.98 941.72,613.87 942.05,613.67 942.39,614.42 942.73,615.26 943.07,614.82 943.40,614.97 943.74,615.04 944.08,615.74 944.41,614.48 944.75,613.94 945.09,614.16 945.43,615.55 945.76,614.60 946.10,615.39 946.44,614.20 946.77,614.78 947.11,613.70 947.45,614.01 947.79,615.50 948.12,615.07 948.46,613.75 948.80,614.75 949.14,614.81 949.47,614.79 949.81,614.07 950.15,613.70 950.48,614.59 950.82,613.63 951.16,614.45 951.50,615.54 951.83,613.97 952.17,614.84 952.51,615.65 952.84,613.61 953.18,615.69 953.52,614.49 953.86,614.70 954.19,613.82 954.53,614.90 954.87,615.29 955.20,615.15 955.54,615.32 955.88,614.52 956.22,614.98 956.55,614.11 956.89,615.23 957.23,614.99 957.57,615.22 957.90,613.60 958.24,613.91 958.58,613.89 958.91,614.40 959.25,614.88 959.59,615.45 959.93,613.93 960.26,614.68 960.60,615.68 960.94,615.39 961.27,615.55 961.61,614.18 961.95,613.78 962.29,615.33 962.62,614.01 962.96,615.05 963.30,614.26 963.63,613.86 963.97,614.39 964.31,614.00 964.65,614.93 964.98,615.74 965.32,614.64 965.66,614.47 966.00,615.36 966.33,614.91 966.67,615.07 967.01,615.71 967.34,615.08 967.68,614.92 968.02,614.72 968.36,614.21 968.69,614.88 969.03,613.60 969.37,613.97 969.70,613.73 970.04,614.24 970.38,614.29 970.72,614.58 971.05,614.00 971.39,614.97 971.73,614.46 972.06,614.27 972.40,614.61 972.74,615.14 973.08,615.59 973.41,615.57 973.75,614.98 974.09,614.49 974.43,614.09 974.76,614.19 975.10,615.09 975.44,613.72 975.77,615.16 976.11,614.19 976.45,615.61 976.79,614.10 977.12,614.29 977.46,613.66 977.80,613.79 978.13,614.25 978.47,613.92 978.81,614.14 979.15,614.42 979.48,615.30 979.82,614.63 980.16,613.79 980.49,615.24 980.83,613.62 981.17,614.57 981.51,614.90 981.84,615.76 982.18,614.90 982.52,615.37 982.86,614.32 983.19,613.78 983.53,613.76 983.87,614.41 984.20,614.91 984.54,615.52 984.88,614.25 985.22,614.54 985.55,614.19 985.89,614.94 986.23,613.81 986.56,615.30 986.90,615.09 987.24,615.17 987.58,614.39 987.91,613.79 988.25,615.40 988.59,614.37 988.92,614.07 989.26,615.27 989.60,615.63 989.94,614.52 990.27,613.93 990.61,613.83 990.95,614.16 991.29,614.85 991.62,614.83 991.96,614.60 992.30,613.77 992.63,615.10 992.97,615.15 993.31,614.43 993.65,613.63 993.98,615.35 994.32,615.70 994.66,615.51 994.99,614.52 995.33,614.43 995.67,615.36 996.01,615.35 996.34,614.45 996.68,614.34 997.02,614.24 997.35,614.16 997.69,615.63 998.03,614.70 998.37,613.92 998.70,613.65 999.04,615.06 999.38,613.89 999.72,614.34 1000.05,613.72 1000.39,615.26 1000.73,614.23 1001.06,613.91 1001.40,614.71 1001.74,615.54 1002.08,615.34 1002.41,615.42 1002.75,615.56 1003.09,615.43 1003.42,614.41 1003.76,615.53 1004.10,614.09 1004.44,614.14 1004.77,613.96 1005.11,613.99 1005.45,614.19 1005.78,613.73 1006.12,613.66 1006.46,614.39 1006.80,613.64 1007.13,615.54 1007.47,615.54 1007.81,615.62 1008.15,615.31 1008.48,614.94 1008.82,614.75 1009.16,614.26 1009.49,614.13 1009.83,615.58 1009.83,566.27 1010.06,516.05 1010.17,614.88 1010.28,571.30 1010.51,614.57 1010.84,614.94 1011.18,615.51 1011.52,614.45 1011.85,614.94 1012.19,614.26 1012.53,614.67 1012.87,613.64 1013.20,613.68 1013.54,615.61 1013.88,614.09 1014.21,614.17 1014.55,615.11 1014.89,615.51 1015.23,614.71 1015.56,614.98 1015.90,614.14 1016.24,613.74 1016.58,614.92 1016.91,615.12 1017.25,614.67 1017.59,614.23 1017.92,614.03 1018.26,614.50 1018.60,615.11 1018.94,615.02 1019.27,613.90 1019.61,614.62 1019.95,615.65 1020.28,614.84 1020.62,615.24 1020.96,614.30 1021.07,605.48 1021.30,615.60 1021.30,594.45 1021.52,606.58 1021.63,615.17 1021.97,615.55 1022.31,614.71 1022.64,613.59 1022.98,614.57 1023.32,614.91 1023.66,613.71 1023.99,615.56 1024.33,614.98 1024.67,613.98 1025.01,615.75 1025.34,614.08 1025.68,614.97 1026.02,615.73 1026.35,615.21 1026.69,614.75 1027.03,614.92 1027.37,614.63 1027.70,615.65 1028.04,615.28 1028.38,613.62 1028.71,614.79 1029.05,614.72 1029.39,615.58 1029.73,615.15 1030.06,613.66 1030.40,614.25 1030.74,614.65 1031.07,615.65 1031.41,614.90 1031.75,614.05 1032.09,614.81 1032.31,603.64 1032.42,614.46 1032.54,590.77 1032.76,613.78 1032.76,604.92 1033.10,614.34 1033.44,614.36 1033.77,615.69 1034.11,615.71 1034.45,614.07 1034.78,614.85 1035.12,613.84 1035.46,613.94 1035.80,613.75 1036.13,614.93 1036.47,613.56 1036.81,614.10 1037.14,613.80 1037.48,615.44 1037.82,614.04 1038.16,614.83 1038.49,613.62 1038.83,613.57 1039.17,615.29 1039.50,614.84 1039.84,615.17 1040.18,614.73 1040.52,615.13 1040.85,614.30 1041.19,615.49 1041.53,615.39 1041.87,614.76 1042.20,615.60 1042.54,614.92 1042.88,613.79 1043.21,613.81 1043.55,615.33 1043.55,570.56 1043.78,524.62 1043.89,615.72 1044.00,575.16 1044.23,613.94 1044.56,613.65 1044.90,614.44 1045.24,615.46 1045.57,615.24 1045.91,613.74 1046.25,613.70 1046.59,615.70 1046.92,615.36 1047.26,614.82 1047.60,615.18 1047.93,614.10 1048.27,614.94 1048.61,614.06 1048.95,615.43 1049.28,614.62 1049.62,613.62 1049.96,614.22 1050.30,615.57 1050.63,614.05 1050.97,612.88 1051.31,613.47 1051.64,613.48 1051.98,613.24 1052.32,613.01 1052.66,612.17 1052.99,613.76 1053.33,613.04 1053.67,613.71 1054.00,613.09 1054.34,612.68 1054.68,614.00 1054.79,610.38 1055.02,613.23 1055.02,604.25 1055.24,610.99 1055.35,612.74 1055.69,614.28 1056.03,612.59 1056.36,613.37 1056.70,613.18 1057.04,612.95 1057.38,612.55 1057.71,614.17 1058.05,613.19 1058.39,614.21 1058.73,613.44 1059.06,613.53 1059.40,614.25 1059.74,613.64 1060.07,613.30 1060.41,612.85 1060.75,612.26 1061.09,613.48 1061.42,613.13 1061.76,612.72 1062.10,612.23 1062.43,612.20 1062.77,612.12 1063.11,613.63 1063.45,613.93 1063.78,612.24 1064.12,614.12 1064.46,613.31 1064.79,612.67 1065.13,613.13 1065.47,613.44 1065.81,612.26 1066.03,607.31 1066.14,613.64 1066.26,598.12 1066.48,613.08 1066.48,608.23 1066.82,612.47 1067.16,613.99 1067.49,613.52 1067.83,613.21 1068.17,613.05 1068.50,613.84 1068.84,613.29 1069.18,614.16 1069.52,614.10 1069.85,613.54 1070.19,613.98 1070.53,612.16 1070.86,613.71 1071.20,613.69 1071.54,612.57 1071.88,612.66 1072.21,613.72 1072.55,612.47 1072.89,612.92 1073.22,613.44 1073.56,612.91 1073.90,613.75 1074.24,613.71 1074.57,612.36 1074.91,613.33 1075.25,612.32 1075.59,613.90 1075.92,613.99 1076.26,614.18 1076.60,612.66 1076.93,613.06 1077.27,614.27 1077.27,600.58 1077.50,584.65 1077.61,614.20 1077.72,602.17 1077.95,612.48 1078.28,613.20 1078.62,612.37 1078.96,614.21 1079.29,613.00 1079.63,614.04 1079.97,612.70 1080.31,612.95 1080.64,612.95 1080.98,613.81 1081.32,612.20 1081.65,614.05 1081.99,614.15 1082.33,612.79 1082.67,614.09 1083.00,614.15 1083.34,613.28 1083.68,612.86 1084.02,612.33 1084.35,614.18 1084.69,615.61 1085.03,614.35 1085.36,613.90 1085.70,615.50 1086.04,614.10 1086.38,615.19 1086.71,615.11 1087.05,615.76 1087.39,614.09 1087.72,614.63 1088.06,613.78 1088.40,614.74 1088.74,615.42 1089.07,615.29 1089.41,615.18 1089.75,613.68 1090.08,615.31 1090.42,615.57 1090.76,614.99 1091.10,615.59 1091.43,614.83 1091.77,614.39 1092.11,614.33 1092.45,615.38 1092.78,615.46 1093.12,614.68 1093.46,614.25 1093.79,614.78 1094.13,614.50 1094.47,613.75 1094.81,615.45 1095.14,615.17 1095.48,614.68 1095.82,614.58 1096.15,613.78 1096.49,614.54 1096.83,614.30 1097.17,614.84 1097.50,614.04 1097.84,613.92 1098.18,615.12 1098.51,615.53 1098.85,615.19 1099.19,614.98 1099.53,613.80 1099.86,615.18 1100.20,614.38 1100.54,614.35 1100.88,613.66 1101.21,615.51 1101.55,614.07 1101.89,615.02 1102.22,615.54 1102.56,614.37 1102.90,613.90 1103.24,614.48 1103.57,615.66 1103.91,613.62 1104.25,614.92 1104.58,614.36 1104.92,614.17 1105.26,615.19 1105.60,614.86 1105.93,615.04 1106.27,615.55 1106.61,615.62 1106.94,614.18 1107.28,614.86 1107.62,613.85 1107.96,615.63 1108.29,615.10 1108.63,615.37 1108.97,613.68 1109.31,614.02 1109.64,613.79 1109.98,614.65 1110.32,615.54 1110.65,614.85 1110.99,615.27 1111.33,615.71 1111.67,614.52 1112.00,615.13 1112.34,615.53 1112.68,614.64 1113.01,613.71 1113.35,613.68 1113.69,614.74 1114.03,615.54 1114.36,614.07 1114.70,615.51 1115.04,614.58 1115.37,615.58 1115.71,613.59 1116.05,614.57 1116.39,614.80 1116.72,615.16 1117.06,614.55 1117.40,613.62 1117.74,614.82 1118.07,615.30 1118.41,614.63 1118.75,613.74 1119.08,614.92 1119.42,614.37 1119.76,613.74 1120.10,615.05 1120.43,613.98 1120.77,614.60 1121.11,615.46 1121.44,615.65 1121.78,613.69 1122.12,614.74 1122.46,614.79 1122.79,613.74 1123.13,614.50 1123.47,614.66 1123.80,615.14 1124.14,614.12 1124.48,615.20 1124.82,614.73 1125.15,614.09 1125.49,614.43 1125.83,615.47 1126.17,615.32 1126.50,614.23 1126.84,614.16 1127.18,615.54 1127.51,613.57 1127.85,615.47 1128.19,615.40 1128.53,615.57 1128.86,614.78 1129.20,614.40" fill="none" stroke="#3535FF" stroke-width=".6" stroke-linejoin="bevel"/></g><g font-family="Liberation Sans" font-size="14" fill="#000"><text x="842" y="145">Bearing damage</text><text x="455" y="499.5">Gear</text><text x="455" y="518">fault</text><text x="541" y="499.5">Gear</text><text x="541" y="518">fault</text><text x="823" y="480">Alignment errors</text><text x="826" y="499.5">Unbalance</text><text x="1003" y="486">Field error</text></g><g stroke="#1A1A1A" stroke-width="1.3" fill="none"><path d="M576 310.6 L692 155.5 H956"/><path d="M456 370 L443.5 584"/><path d="M518.5 294.5 L536 541"/><path d="M622 325 L802 470"/><path d="M614 348 L797 497"/><path d="M732.4 292.5 L1007 503"/></g><circle cx="576" cy="310.6" r="3.8" fill="#000"/><circle cx="956" cy="155.5" r="3.8" fill="#000"/><circle cx="456" cy="370" r="3.8" fill="#000"/><circle cx="443.5" cy="584" r="3.8" fill="#000"/><circle cx="518.5" cy="294.5" r="3.8" fill="#000"/><circle cx="536" cy="541" r="3.8" fill="#000"/><circle cx="622" cy="325" r="3.8" fill="#000"/><circle cx="802" cy="470" r="3.8" fill="#000"/><circle cx="614" cy="348" r="3.8" fill="#000"/><circle cx="797" cy="497" r="3.8" fill="#000"/><circle cx="732.4" cy="292.5" r="3.8" fill="#000"/><circle cx="1007" cy="503" r="3.8" fill="#000"/></symbol></defs></svg>


<!-- RIGHT SCROLLBAR -->
<div class="a" style="left:1264px;top:76px;width:16px;height:603px;background:linear-gradient(90deg,#F3F1EA,#FEFEFB)"></div>
<div class="a" style="left:1264px;top:77px;width:15px;height:15px;border-radius:2px;background:linear-gradient(135deg,#D8E6FE,#B6CBF4);border:1px solid #fff"></div>
<svg class="a" style="left:1267px;top:81px" width="9" height="6"><path d="M1 5L4.5 1.5L8 5" fill="none" stroke="#4D6185" stroke-width="2"/></svg>
<div class="a" style="left:1264px;top:170px;width:15px;height:9px;border-radius:2px;background:linear-gradient(90deg,#C6D8FC,#B4CCF6);border:1px solid #fff"></div>
<div class="a" style="left:1264px;top:615px;width:15px;height:15px;border-radius:2px;background:linear-gradient(135deg,#D8E6FE,#B6CBF4);border:1px solid #fff"></div>
<svg class="a" style="left:1267px;top:620px" width="9" height="6"><path d="M1 1L4.5 4.5L8 1" fill="none" stroke="#4D6185" stroke-width="2"/></svg>
<div class="a" style="left:1264px;top:631px;width:16px;height:32px;background:#C3DAF9;border-bottom:1px solid #8AAEE6"></div>
<svg class="a" style="left:1267px;top:635px" width="10" height="26"><path d="M5 1L9 5H1Z" fill="#000"/><path d="M5 5.5L9 9.5H1Z" fill="#000"/><path d="M1 16H9L5 20Z" fill="#000"/><path d="M1 20.5H9L5 24.5Z" fill="#000"/><path d="M1 15H9" stroke="#000"/><path d="M1 10.5H9" stroke="#000" stroke-width=".5"/></svg>
<div class="a" style="left:1264px;top:664px;width:16px;height:15px;background:#ECE9D8"></div>

<div class="a" style="left:0;top:76px;width:199px;height:21px;background:#C3DAF9"></div>
<div class="a" style="left:0;top:97px;width:199px;height:609px;background:#fff;overflow:hidden">
<div class="t" style="left:8px;top:15px;font:bold 12px 'Liberation Sans';color:#000">11</div>
<svg class="a" style="left:8px;top:28px" width="12" height="10"><path d="M6.5 .8L8 4.2H11.5L8.7 6.3L9.8 9.5L6.5 7.5L3.2 9.5L4.3 6.3L1.5 4.2H5Z" fill="none" stroke="#A0A090" stroke-width=".9"/><path d="M0 3H3M0 5.5H3M0 8H3" stroke="#A0A090" stroke-width=".8"/></svg>
<svg class="a" style="left:31px;top:8px" width="142" height="99" viewBox="0 0 142 99"><rect x="0.5" y="0.5" width="141" height="98" fill="#fff" stroke="#000" stroke-width="1.2"/><rect x="1" y="1" width="140" height="7.5" fill="#E8E8E8"/><path d="M1 8.6H141" stroke="#000" stroke-width="1"/><path d="M61 5H139" stroke="#000" stroke-width="2.4" stroke-dasharray="3 .7 2 .6 4 .8"/><rect x="1" y="91" width="140" height="7.5" fill="#E8E8E8"/><path d="M1 91H141" stroke="#000" stroke-width="1"/><path d="M4 93.5H50M4 96H30" stroke="#444" stroke-width=".9" stroke-dasharray="2 .5"/><rect x="55" y="92.2" width="30" height="3" fill="#111"/><path d="M126 93.5H138M120 96H138" stroke="#444" stroke-width=".8" stroke-dasharray="2 .5"/><rect x="6" y="10" width="19" height="2.5" fill="#111"/><rect x="11" y="13.5" width="4" height="17" rx="2" fill="#E0E0E0" stroke="#111" stroke-width=".8"/><path d="M15 22H30" stroke="#222" stroke-width="1.6"/><rect x="28" y="17" width="22" height="10" rx="2" fill="#BDBDBD" stroke="#111" stroke-width=".9"/><rect x="29" y="20.0" width="20" height="3.5" fill="#F4F4F4"/><path d="M16 22H50" stroke="#10C010" stroke-width="1.4" stroke-dasharray="3 2"/><path d="M18 18L20 22L18 26L16 22ZM38 18L40 22L38 26L36 22ZM45 18L47 22L45 26L43 22Z" fill="#10C010"/><path d="M29 16L31.5 22L29 28L26.5 22ZM36 16L38.5 22L36 28L33.5 22Z" fill="#F00"/><path d="M14 31H50" stroke="#111" stroke-width="1.3"/><path d="M40 35H44" stroke="#333" stroke-width=".8"/><rect x="64" y="17" width="31" height="10" rx="2" fill="#BDBDBD" stroke="#111" stroke-width=".9"/><rect x="65" y="20.0" width="29" height="3.5" fill="#F4F4F4"/><path d="M65.5 16L68 22L65.5 28L63 22ZM76 16L78.5 22L76 28L73.5 22ZM83 16L85.5 22L83 28L80.5 22ZM94 16L96.5 22L94 28L91.5 22Z" fill="#F00"/><path d="M66 19V25M94 19V25" stroke="#10C010" stroke-width="1.3"/><path d="M66 22H72M86 22H92" stroke="#222" stroke-width="1.2"/><path d="M62 30.5H96" stroke="#111" stroke-width="1.3"/><path d="M73 35H92" stroke="#333" stroke-width=".8"/><path d="M8 37.5H38M40 35.5H44" stroke="#111" stroke-width="1"/><rect x="11" y="40" width="4" height="17" rx="2" fill="#E0E0E0" stroke="#111" stroke-width=".8"/><rect x="28" y="44" width="22" height="10" rx="2" fill="#BDBDBD" stroke="#111" stroke-width=".9"/><rect x="29" y="47.0" width="20" height="3.5" fill="#F4F4F4"/><path d="M15 49H30" stroke="#222" stroke-width="1.6"/><path d="M19 43L21.5 49L19 55L16.5 49ZM28.5 43L31 49L28.5 55L26 49ZM35.5 43L38 49L35.5 55L33 49ZM48 43L50.5 49L48 55L45.5 49Z" fill="#F00"/><path d="M14 58H50" stroke="#111" stroke-width="1.3"/><path d="M18 58.5h2M27 58.5h2M36 58.5h2M44 58.5h2" stroke="#2020F0" stroke-width="1.4"/><path d="M8 63.5H68" stroke="#111" stroke-width="1.2" stroke-dasharray="1.5 .8"/><rect x="14" y="66" width="25" height="16" fill="#C8C8C8" stroke="#111" stroke-width="1.2"/><rect x="17" y="68" width="3.5" height="12" fill="#9898F0" stroke="#2020C0" stroke-width=".5"/><rect x="23" y="69" width="12" height="10" fill="#EEE"/><path d="M24 68.5L26.5 74L24 79.5L21.5 74Z" fill="#F00"/><rect x="33" y="69" width="2.5" height="10" fill="#10C010"/><path d="M13 84H41" stroke="#111" stroke-width="1.1"/><path d="M17 84h2M26 84h2M35 84h2" stroke="#2020F0" stroke-width="1.4"/><rect x="68.5" y="66" width="25" height="16" fill="#C8C8C8" stroke="#111" stroke-width="1.2"/><rect x="71.5" y="68" width="3.5" height="12" fill="#9898F0" stroke="#2020C0" stroke-width=".5"/><rect x="77.5" y="69" width="12" height="10" fill="#EEE"/><path d="M78.5 68.5L81.0 74L78.5 79.5L76.0 74Z" fill="#F00"/><rect x="87.5" y="69" width="2.5" height="10" fill="#10C010"/><path d="M67.5 84H95.5" stroke="#111" stroke-width="1.1"/><path d="M71.5 84h2M80.5 84h2M89.5 84h2" stroke="#2020F0" stroke-width="1.4"/><path d="M19 90H30M73 90H89" stroke="#333" stroke-width=".7"/></svg>
<div class="t" style="left:8px;top:127px;font:bold 12px 'Liberation Sans';color:#000">12</div>
<svg class="a" style="left:8px;top:140px" width="12" height="10"><path d="M6.5 .8L8 4.2H11.5L8.7 6.3L9.8 9.5L6.5 7.5L3.2 9.5L4.3 6.3L1.5 4.2H5Z" fill="none" stroke="#A0A090" stroke-width=".9"/><path d="M0 3H3M0 5.5H3M0 8H3" stroke="#A0A090" stroke-width=".8"/></svg>
<svg class="a" style="left:31px;top:120px" width="142" height="99" viewBox="0 0 142 99"><rect x="0.5" y="0.5" width="141" height="98" fill="#fff" stroke="#000" stroke-width="1.2"/><rect x="1" y="1" width="140" height="7.5" fill="#E8E8E8"/><path d="M1 8.6H141" stroke="#000" stroke-width="1"/><path d="M38 5H139" stroke="#000" stroke-width="2.4" stroke-dasharray="3 .7 2 .6 4 .8"/><rect x="1" y="91" width="140" height="7.5" fill="#E8E8E8"/><path d="M1 91H141" stroke="#000" stroke-width="1"/><path d="M4 93.5H50M4 96H30" stroke="#444" stroke-width=".9" stroke-dasharray="2 .5"/><rect x="55" y="92.2" width="30" height="3" fill="#111"/><path d="M126 93.5H138M120 96H138" stroke="#444" stroke-width=".8" stroke-dasharray="2 .5"/><path d="M52 11V66" stroke="#111" stroke-width=".9" stroke-dasharray="3 1"/><path d="M28 15.5H44M30 18.5H42" stroke="#222" stroke-width="1.1"/><path d="M78 15.5H106" stroke="#222" stroke-width="1.1"/><path d="M14 51H52" stroke="#111" stroke-width=".9"/><rect x="19.5" y="28" width="5.3" height="23" fill="#F00" stroke="#111" stroke-width=".6"/><rect x="19.5" y="37.2" width="5.3" height="6.8999999999999995" fill="#FF0" stroke="#111" stroke-width=".5"/><rect x="19.5" y="44.099999999999994" width="5.3" height="6.8999999999999995" fill="#0C0" stroke="#111" stroke-width=".5"/><rect x="57.7" y="32" width="5.3" height="23" fill="#F00" stroke="#111" stroke-width=".6"/><rect x="57.7" y="41.2" width="5.3" height="6.8999999999999995" fill="#FF0" stroke="#111" stroke-width=".5"/><rect x="57.7" y="48.099999999999994" width="5.3" height="6.8999999999999995" fill="#0C0" stroke="#111" stroke-width=".5"/><rect x="93.7" y="32" width="5.3" height="23" fill="#F00" stroke="#111" stroke-width=".6"/><rect x="93.7" y="41.2" width="5.3" height="6.8999999999999995" fill="#FF0" stroke="#111" stroke-width=".5"/><rect x="93.7" y="48.099999999999994" width="5.3" height="6.8999999999999995" fill="#0C0" stroke="#111" stroke-width=".5"/><path d="M14 21V62M128 21V62" stroke="#111" stroke-width="1"/><path d="M14 19l-2 7h4zM128 19l-2 7h4z" fill="#111"/><path d="M14 62.5H128" stroke="#111" stroke-width="1.1"/><rect x="24.8" y="53" width="23.8" height="9" fill="#1A9A9A"/><rect x="62.6" y="56" width="23.4" height="6" fill="#1A9A9A"/><rect x="99" y="51" width="23.8" height="11" fill="#1A9A9A"/><path d="M63 55H90M99 50H123" stroke="#1A9A9A" stroke-width="1.5"/><path d="M70 36.5H82M73 39H79M72 41.5H80" stroke="#0A0" stroke-width="1"/><path d="M107 36.5H119M109 39H115" stroke="#F00" stroke-width="1"/><path d="M36 36.5H42M32 39H44M34 41.5H44" stroke="#111" stroke-width=".8"/><path d="M28 72H58M31 75H45M34 78H60M38 81H46M75 72H119M75 75H126M75 78H128M75 81H101" stroke="#111" stroke-width=".9"/></svg>
<div class="t" style="left:8px;top:239px;font:bold 12px 'Liberation Sans';color:#000">13</div>
<svg class="a" style="left:8px;top:252px" width="12" height="10"><path d="M6.5 .8L8 4.2H11.5L8.7 6.3L9.8 9.5L6.5 7.5L3.2 9.5L4.3 6.3L1.5 4.2H5Z" fill="none" stroke="#A0A090" stroke-width=".9"/><path d="M0 3H3M0 5.5H3M0 8H3" stroke="#A0A090" stroke-width=".8"/></svg>
<svg class="a" style="left:31px;top:232px" width="142" height="99" viewBox="0 0 142 99"><rect x="0.5" y="0.5" width="141" height="98" fill="#fff" stroke="#000" stroke-width="1.2"/><rect x="1" y="1" width="140" height="7.5" fill="#E8E8E8"/><path d="M1 8.6H141" stroke="#000" stroke-width="1"/><rect x="1" y="91" width="140" height="7.5" fill="#E8E8E8"/><path d="M1 91H141" stroke="#000" stroke-width="1"/><path d="M4 93.5H50M4 96H30" stroke="#444" stroke-width=".9" stroke-dasharray="2 .5"/><rect x="55" y="92.2" width="30" height="3" fill="#111"/><path d="M126 93.5H138M120 96H138" stroke="#444" stroke-width=".8" stroke-dasharray="2 .5"/><text x="71" y="38" text-anchor="middle" font-family="Liberation Sans" font-size="10.5" fill="#0000E0">Vibration Excitation from</text><text x="71" y="50" text-anchor="middle" font-family="Liberation Sans" font-size="10.5" fill="#0000E0">Machine Damage</text></svg>
<div class="t" style="left:8px;top:351px;font:bold 12px 'Liberation Sans';color:#000">14</div>
<svg class="a" style="left:8px;top:364px" width="12" height="10"><path d="M6.5 .8L8 4.2H11.5L8.7 6.3L9.8 9.5L6.5 7.5L3.2 9.5L4.3 6.3L1.5 4.2H5Z" fill="none" stroke="#A0A090" stroke-width=".9"/><path d="M0 3H3M0 5.5H3M0 8H3" stroke="#A0A090" stroke-width=".8"/></svg>
<svg class="a" style="left:31px;top:344px" width="142" height="99" viewBox="0 0 142 99"><rect x="0.5" y="0.5" width="141" height="98" fill="#fff" stroke="#000" stroke-width="1.2"/><rect x="1" y="1" width="140" height="7.5" fill="#E8E8E8"/><path d="M1 8.6H141" stroke="#000" stroke-width="1"/><path d="M72 5H139" stroke="#000" stroke-width="2.4" stroke-dasharray="3 .7 2 .6 4 .8"/><rect x="1" y="91" width="140" height="7.5" fill="#E8E8E8"/><path d="M1 91H141" stroke="#000" stroke-width="1"/><path d="M4 93.5H50M4 96H30" stroke="#444" stroke-width=".9" stroke-dasharray="2 .5"/><rect x="55" y="92.2" width="30" height="3" fill="#111"/><path d="M126 93.5H138M120 96H138" stroke="#444" stroke-width=".8" stroke-dasharray="2 .5"/><rect x="33.4" y="18.2" width="35.8" height="11.9" fill="#FFC8C8" stroke="#111" stroke-width=".8"/><path d="M36 21.5H60M36 24.5H64M36 27.5H58" stroke="#333" stroke-width=".7"/><rect x="23.5" y="31.7" width="20.5" height="7.7" fill="#C8F0C8" stroke="#111" stroke-width=".8"/><path d="M25 34H38M25 37H36" stroke="#333" stroke-width=".6"/><rect x="71.4" y="22" width="13" height="8" fill="#C8F0C8" stroke="#111" stroke-width=".8"/><path d="M73 24.5H79M73 27.5H81" stroke="#333" stroke-width=".6"/><rect x="97.7" y="16.9" width="12" height="16" fill="#D8D8F8"/><path d="M99.5 23H104V20.5L107.5 24.5L104 28.5V26H99.5Z" fill="#B8C0F0" stroke="#334" stroke-width=".6"/><rect x="86.4" y="16" width="11.3" height="21.4" rx="2" fill="#7C7CF0" stroke="#111" stroke-width="1"/><rect x="88.5" y="10.9" width="7" height="5" fill="#9C9CF4" stroke="#111" stroke-width=".7"/><rect x="90" y="23" width="4" height="8" fill="#222"/><circle cx="92" cy="25" r=".8" fill="#FF0"/><rect x="110.2" y="35.4" width="24.5" height="29.8" fill="#FFFAC8" stroke="#111" stroke-width=".8"/><path d="M113 40H128M113 44H126M113 48H130M113 52H124M113 56H128M113 60H120" stroke="#333" stroke-width=".7"/><rect x="21.5" y="43.4" width="24.5" height="18.5" rx="2.5" fill="#D8D8D8" stroke="#111" stroke-width="1.4"/><rect x="25.5" y="47.5" width="16" height="10.5" fill="#6464F0"/><rect x="29" y="50" width="6" height="4" fill="#222"/><rect x="12.2" y="46" width="4.7" height="13.3" fill="#FCC" stroke="#111" stroke-width=".7"/><rect x="56.6" y="44" width="46.4" height="17.2" fill="#9A9A9A" stroke="#111" stroke-width="1.3"/><rect x="75" y="47.5" width="25" height="5" fill="#C890B0"/><rect x="68" y="54" width="25" height="3.5" fill="#C890B0"/><rect x="89" y="37.4" width="5.5" height="24" fill="#8888F0" stroke="#111" stroke-width=".6"/><circle cx="62" cy="52" r="4" fill="#555" stroke="#111" stroke-width=".8"/><circle cx="70" cy="49" r="3" fill="#444"/><path d="M54.6 30V49M64 33L83 35.4M47 52H57M50 55L58 50M80 36L85 45M100 37L106 40" stroke="#F00" stroke-width="1.2"/><circle cx="83" cy="35.4" r="2.8" fill="#F00"/><circle cx="54.6" cy="49" r="2.3" fill="#F00"/><path d="M100 36L104 40L109 41Z" fill="#F00"/><path d="M18 57L15 54V60Z" fill="#F00"/><path d="M34 62C31 65 37 67 34 70C31 73 37 75 34 78" fill="none" stroke="#F00" stroke-width="1.6"/><rect x="38.3" y="72.5" width="48.1" height="15.2" fill="#FFFAC8" stroke="#111" stroke-width=".9"/><path d="M41 77H76M41 80.5H52M41 84H78" stroke="#333" stroke-width=".8"/><rect x="63.2" y="65.9" width="17.9" height="6.6" fill="#FFFAC8" stroke="#111" stroke-width=".7"/><rect x="89" y="73.2" width="27.9" height="12.5" fill="#F5D0B8" stroke="#111" stroke-width=".8"/><path d="M91 76.5H104M91 79.5H111M91 82.5H101" stroke="#333" stroke-width=".7"/><path d="M99 62V73" stroke="#F00" stroke-width="1.2"/><rect x="97" y="65" width="4" height="6" fill="#222"/><rect x="48" y="60" width="4" height="8" fill="#222"/><rect x="53" y="61" width="6" height="6" fill="#333"/><rect x="50" y="38" width="4" height="7" fill="#222"/><rect x="75" y="40" width="8" height="4" fill="#222"/><path d="M50 66V70H60" stroke="#F66" stroke-width="1.2" fill="none"/></svg>
<div class="t" style="left:8px;top:463px;font:bold 12px 'Liberation Sans';color:#000">15</div>
<svg class="a" style="left:8px;top:476px" width="12" height="10"><path d="M6.5 .8L8 4.2H11.5L8.7 6.3L9.8 9.5L6.5 7.5L3.2 9.5L4.3 6.3L1.5 4.2H5Z" fill="none" stroke="#A0A090" stroke-width=".9"/><path d="M0 3H3M0 5.5H3M0 8H3" stroke="#A0A090" stroke-width=".8"/></svg>
<div class="a" style="left:26px;top:451px;width:152px;height:109px;border:3px solid #8C8C8C;background:#fff"></div>
<svg class="a" style="left:31px;top:456px" width="142" height="99" viewBox="0 0 142 99"><rect x="0.5" y="0.5" width="141" height="98" fill="#fff" stroke="#000" stroke-width="1.2"/><rect x="1" y="1" width="140" height="7.5" fill="#E8E8E8"/><path d="M1 8.6H141" stroke="#000" stroke-width="1"/><path d="M60 5H139" stroke="#000" stroke-width="2.4" stroke-dasharray="3 .7 2 .6 4 .8"/><rect x="1" y="91" width="140" height="7.5" fill="#E8E8E8"/><path d="M1 91H141" stroke="#000" stroke-width="1"/><path d="M4 93.5H50M4 96H30" stroke="#444" stroke-width=".9" stroke-dasharray="2 .5"/><rect x="55" y="92.2" width="30" height="3" fill="#111"/><path d="M126 93.5H138M120 96H138" stroke="#444" stroke-width=".8" stroke-dasharray="2 .5"/><svg x="1" y="1" width="140" height="97" viewBox="0 0 932 653" preserveAspectRatio="none"><use href="#s15d" width="932" height="653"/></svg><g stroke="#111" stroke-width="1" fill="none"><polyline points="47.3,41.0 64.7,18.0 104.3,18.0"/><polyline points="29.2,49.9 27.4,81.7"/><polyline points="38.6,38.7 41.3,75.3"/><polyline points="54.2,43.2 81.2,64.7"/><polyline points="53.0,46.6 80.5,68.7"/><polyline points="70.8,38.4 112.0,69.6"/></g><g fill="#2020F0"><rect x="84.8" y="29.6" width=".9" height=".9"/><rect x="85.3" y="35.0" width=".9" height=".9"/><rect x="86.0" y="35.5" width=".9" height=".9"/><rect x="86.7" y="37.6" width=".9" height=".9"/><rect x="87.2" y="36.6" width=".9" height=".9"/><rect x="87.9" y="36.8" width=".9" height=".9"/><rect x="88.4" y="35.1" width=".9" height=".9"/><rect x="89.1" y="37.3" width=".9" height=".9"/><rect x="89.7" y="37.7" width=".9" height=".9"/><rect x="90.4" y="36.9" width=".9" height=".9"/><rect x="91.1" y="37.3" width=".9" height=".9"/><rect x="91.7" y="36.4" width=".9" height=".9"/><rect x="92.4" y="36.7" width=".9" height=".9"/><rect x="93.1" y="35.8" width=".9" height=".9"/><rect x="93.6" y="36.7" width=".9" height=".9"/><rect x="94.3" y="36.3" width=".9" height=".9"/><rect x="94.8" y="36.8" width=".9" height=".9"/><rect x="95.5" y="35.4" width=".9" height=".9"/><rect x="96.1" y="35.9" width=".9" height=".9"/><rect x="96.8" y="35.6" width=".9" height=".9"/><rect x="97.3" y="36.9" width=".9" height=".9"/><rect x="98.0" y="34.8" width=".9" height=".9"/><rect x="98.5" y="34.9" width=".9" height=".9"/><rect x="99.2" y="36.9" width=".9" height=".9"/><rect x="99.9" y="35.5" width=".9" height=".9"/><rect x="100.5" y="35.4" width=".9" height=".9"/><rect x="101.2" y="35.6" width=".9" height=".9"/><rect x="101.9" y="36.3" width=".9" height=".9"/><rect x="102.4" y="36.7" width=".9" height=".9"/><rect x="103.1" y="35.8" width=".9" height=".9"/><rect x="103.6" y="33.9" width=".9" height=".9"/><rect x="104.1" y="36.6" width=".9" height=".9"/><rect x="104.8" y="34.9" width=".9" height=".9"/><rect x="105.4" y="22.9" width=".9" height=".9"/><rect x="105.8" y="34.3" width=".9" height=".9"/><rect x="106.4" y="30.0" width=".9" height=".9"/><rect x="106.8" y="32.0" width=".9" height=".9"/><rect x="107.3" y="22.9" width=".9" height=".9"/><rect x="107.6" y="30.5" width=".9" height=".9"/><rect x="108.2" y="35.9" width=".9" height=".9"/><rect x="108.9" y="36.4" width=".9" height=".9"/><rect x="109.5" y="36.6" width=".9" height=".9"/><rect x="110.0" y="35.2" width=".9" height=".9"/><rect x="110.7" y="35.3" width=".9" height=".9"/><rect x="111.2" y="37.4" width=".9" height=".9"/><rect x="111.9" y="37.0" width=".9" height=".9"/><rect x="112.6" y="36.9" width=".9" height=".9"/><rect x="113.1" y="37.7" width=".9" height=".9"/><rect x="113.8" y="37.7" width=".9" height=".9"/><rect x="114.4" y="37.9" width=".9" height=".9"/><rect x="115.1" y="37.8" width=".9" height=".9"/><rect x="115.8" y="37.9" width=".9" height=".9"/><rect x="116.5" y="38.1" width=".9" height=".9"/><rect x="117.1" y="38.3" width=".9" height=".9"/><rect x="117.8" y="38.1" width=".9" height=".9"/><rect x="118.5" y="38.2" width=".9" height=".9"/><rect x="119.1" y="38.3" width=".9" height=".9"/><rect x="119.8" y="38.1" width=".9" height=".9"/><rect x="120.5" y="38.4" width=".9" height=".9"/><rect x="121.1" y="38.2" width=".9" height=".9"/><rect x="121.8" y="38.4" width=".9" height=".9"/><rect x="122.5" y="38.3" width=".9" height=".9"/><rect x="123.1" y="38.4" width=".9" height=".9"/><rect x="123.8" y="38.3" width=".9" height=".9"/><rect x="124.5" y="38.2" width=".9" height=".9"/><rect x="125.0" y="38.2" width=".9" height=".9"/><rect x="125.7" y="38.4" width=".9" height=".9"/><rect x="126.3" y="38.4" width=".9" height=".9"/><rect x="127.0" y="38.4" width=".9" height=".9"/><rect x="127.7" y="38.4" width=".9" height=".9"/><rect x="128.3" y="38.4" width=".9" height=".9"/><rect x="129.0" y="38.4" width=".9" height=".9"/><rect x="23.6" y="85.3" width=".9" height=".9"/><rect x="24.3" y="63.0" width=".9" height=".9"/><rect x="24.9" y="83.7" width=".9" height=".9"/><rect x="25.5" y="84.7" width=".9" height=".9"/><rect x="26.5" y="86.6" width=".9" height=".9"/><rect x="27.3" y="86.4" width=".9" height=".9"/><rect x="28.1" y="86.6" width=".9" height=".9"/><rect x="29.1" y="86.7" width=".9" height=".9"/><rect x="29.9" y="86.0" width=".9" height=".9"/><rect x="30.7" y="86.0" width=".9" height=".9"/><rect x="31.5" y="86.6" width=".9" height=".9"/><rect x="32.5" y="86.3" width=".9" height=".9"/><rect x="33.5" y="86.0" width=".9" height=".9"/><rect x="34.5" y="86.4" width=".9" height=".9"/><rect x="35.4" y="86.1" width=".9" height=".9"/><rect x="36.4" y="86.4" width=".9" height=".9"/><rect x="37.3" y="86.5" width=".9" height=".9"/><rect x="38.2" y="86.4" width=".9" height=".9"/><rect x="39.1" y="86.0" width=".9" height=".9"/><rect x="40.0" y="85.7" width=".9" height=".9"/><rect x="40.8" y="86.1" width=".9" height=".9"/><rect x="41.6" y="86.5" width=".9" height=".9"/><rect x="42.5" y="86.1" width=".9" height=".9"/><rect x="43.3" y="86.6" width=".9" height=".9"/><rect x="44.3" y="86.5" width=".9" height=".9"/><rect x="45.1" y="86.4" width=".9" height=".9"/><rect x="46.1" y="86.5" width=".9" height=".9"/><rect x="47.0" y="80.0" width=".9" height=".9"/><rect x="47.8" y="85.8" width=".9" height=".9"/><rect x="48.8" y="86.6" width=".9" height=".9"/><rect x="49.6" y="86.0" width=".9" height=".9"/><rect x="50.6" y="86.2" width=".9" height=".9"/><rect x="51.5" y="86.5" width=".9" height=".9"/><rect x="52.4" y="86.7" width=".9" height=".9"/><rect x="53.4" y="86.0" width=".9" height=".9"/><rect x="54.4" y="86.6" width=".9" height=".9"/><rect x="55.2" y="86.6" width=".9" height=".9"/><rect x="56.2" y="86.4" width=".9" height=".9"/><rect x="57.2" y="86.2" width=".9" height=".9"/><rect x="58.1" y="86.1" width=".9" height=".9"/><rect x="59.0" y="86.2" width=".9" height=".9"/><rect x="59.9" y="86.6" width=".9" height=".9"/><rect x="60.7" y="86.5" width=".9" height=".9"/><rect x="61.6" y="86.6" width=".9" height=".9"/><rect x="62.5" y="85.6" width=".9" height=".9"/><rect x="63.3" y="86.6" width=".9" height=".9"/><rect x="64.2" y="86.6" width=".9" height=".9"/><rect x="65.2" y="86.4" width=".9" height=".9"/><rect x="66.2" y="86.0" width=".9" height=".9"/><rect x="67.0" y="86.0" width=".9" height=".9"/><rect x="68.0" y="86.5" width=".9" height=".9"/><rect x="79.7" y="85.7" width=".9" height=".9"/><rect x="80.7" y="85.9" width=".9" height=".9"/><rect x="81.9" y="85.7" width=".9" height=".9"/><rect x="83.1" y="86.1" width=".9" height=".9"/><rect x="84.1" y="85.8" width=".9" height=".9"/><rect x="85.2" y="86.1" width=".9" height=".9"/><rect x="86.4" y="86.0" width=".9" height=".9"/><rect x="87.6" y="86.1" width=".9" height=".9"/><rect x="88.9" y="86.2" width=".9" height=".9"/><rect x="90.2" y="86.2" width=".9" height=".9"/><rect x="91.5" y="86.2" width=".9" height=".9"/><rect x="92.8" y="86.3" width=".9" height=".9"/><rect x="94.1" y="86.2" width=".9" height=".9"/><rect x="95.5" y="86.0" width=".9" height=".9"/><rect x="96.8" y="85.9" width=".9" height=".9"/><rect x="98.1" y="86.1" width=".9" height=".9"/><rect x="99.4" y="85.9" width=".9" height=".9"/><rect x="100.7" y="86.1" width=".9" height=".9"/><rect x="102.1" y="86.4" width=".9" height=".9"/><rect x="103.4" y="86.2" width=".9" height=".9"/><rect x="104.7" y="86.1" width=".9" height=".9"/><rect x="106.0" y="86.4" width=".9" height=".9"/><rect x="107.3" y="86.3" width=".9" height=".9"/><rect x="108.6" y="86.3" width=".9" height=".9"/><rect x="110.0" y="86.2" width=".9" height=".9"/><rect x="111.3" y="86.3" width=".9" height=".9"/><rect x="112.5" y="86.2" width=".9" height=".9"/><rect x="113.8" y="86.3" width=".9" height=".9"/><rect x="114.9" y="86.3" width=".9" height=".9"/><rect x="116.1" y="86.4" width=".9" height=".9"/><rect x="117.4" y="86.1" width=".9" height=".9"/><rect x="118.6" y="86.1" width=".9" height=".9"/><rect x="119.7" y="86.1" width=".9" height=".9"/><rect x="120.9" y="86.0" width=".9" height=".9"/><rect x="122.2" y="86.0" width=".9" height=".9"/><rect x="123.4" y="86.1" width=".9" height=".9"/><rect x="124.7" y="86.2" width=".9" height=".9"/><rect x="126.0" y="86.2" width=".9" height=".9"/><rect x="127.3" y="86.1" width=".9" height=".9"/><rect x="128.6" y="86.2" width=".9" height=".9"/><rect x="130.0" y="86.2" width=".9" height=".9"/></g><g fill="#333"><rect x="84.8" y="39.5" width=".8" height=".8"/><rect x="91.2" y="39.5" width=".8" height=".8"/><rect x="97.7" y="39.5" width=".8" height=".8"/><rect x="104.1" y="39.5" width=".8" height=".8"/><rect x="110.5" y="39.5" width=".8" height=".8"/><rect x="116.9" y="39.5" width=".8" height=".8"/><rect x="123.3" y="39.5" width=".8" height=".8"/><rect x="129.7" y="39.5" width=".8" height=".8"/><rect x="23.6" y="88.2" width=".8" height=".8"/><rect x="30.0" y="88.2" width=".8" height=".8"/><rect x="36.4" y="88.2" width=".8" height=".8"/><rect x="42.8" y="88.2" width=".8" height=".8"/><rect x="49.1" y="88.2" width=".8" height=".8"/><rect x="55.5" y="88.2" width=".8" height=".8"/><rect x="61.9" y="88.2" width=".8" height=".8"/><rect x="68.3" y="88.2" width=".8" height=".8"/><rect x="79.7" y="87.6" width=".8" height=".8"/><rect x="87.0" y="87.6" width=".8" height=".8"/><rect x="94.2" y="87.6" width=".8" height=".8"/><rect x="101.5" y="87.6" width=".8" height=".8"/><rect x="108.7" y="87.6" width=".8" height=".8"/><rect x="116.0" y="87.6" width=".8" height=".8"/><rect x="123.2" y="87.6" width=".8" height=".8"/><rect x="130.5" y="87.6" width=".8" height=".8"/></g><g stroke="#111" stroke-width="1"><path d="M87.2 15.9H102.7"/><path d="M29.1 68.6H33.9"/><path d="M29.1 71.1H33.1"/><path d="M42.0 68.6H46.8"/><path d="M42.0 71.1H46.1"/><path d="M84.4 65.6H100.0"/><path d="M84.8 68.4H94.7"/><path d="M111.4 66.5H121.2"/></g><path d="M1 8.7H141M1 91H141" stroke="#000" stroke-width="1"/><circle cx="47.3" cy="41.0" r="2.3" fill="#000"/><circle cx="104.3" cy="18.0" r="2.3" fill="#000"/><circle cx="29.2" cy="49.9" r="2.3" fill="#000"/><circle cx="27.4" cy="81.7" r="2.3" fill="#000"/><circle cx="38.6" cy="38.7" r="2.3" fill="#000"/><circle cx="41.3" cy="75.3" r="2.3" fill="#000"/><circle cx="54.2" cy="43.2" r="2.3" fill="#000"/><circle cx="81.2" cy="64.7" r="2.3" fill="#000"/><circle cx="53.0" cy="46.6" r="2.3" fill="#000"/><circle cx="80.5" cy="68.7" r="2.3" fill="#000"/><circle cx="70.8" cy="38.4" r="2.3" fill="#000"/><circle cx="112.0" cy="69.6" r="2.3" fill="#000"/></svg>
<div class="t" style="left:8px;top:575px;font:bold 12px 'Liberation Sans';color:#000">16</div>
<svg class="a" style="left:8px;top:588px" width="12" height="10"><path d="M6.5 .8L8 4.2H11.5L8.7 6.3L9.8 9.5L6.5 7.5L3.2 9.5L4.3 6.3L1.5 4.2H5Z" fill="none" stroke="#A0A090" stroke-width=".9"/><path d="M0 3H3M0 5.5H3M0 8H3" stroke="#A0A090" stroke-width=".8"/></svg>
<svg class="a" style="left:31px;top:568px" width="142" height="99" viewBox="0 0 142 99"><rect x="0.5" y="0.5" width="141" height="98" fill="#fff" stroke="#000" stroke-width="1.2"/><rect x="1" y="1" width="140" height="7.5" fill="#E8E8E8"/><path d="M1 8.6H141" stroke="#000" stroke-width="1"/><path d="M52 5H139" stroke="#000" stroke-width="2.4" stroke-dasharray="3 .7 2 .6 4 .8"/><rect x="1" y="91" width="140" height="7.5" fill="#E8E8E8"/><path d="M1 91H141" stroke="#000" stroke-width="1"/><path d="M4 93.5H50M4 96H30" stroke="#444" stroke-width=".9" stroke-dasharray="2 .5"/><rect x="55" y="92.2" width="30" height="3" fill="#111"/><path d="M126 93.5H138M120 96H138" stroke="#444" stroke-width=".8" stroke-dasharray="2 .5"/><rect x="13.3" y="9.7" width="122.9" height="4.9" fill="#BBBBBB"/><path d="M15 12H49M66.5 12H132" stroke="#111" stroke-width="1.1" stroke-dasharray="3 .5"/><path d="M55.6 15V70" stroke="#333" stroke-width="1"/><path d="M13.3 20V70" stroke="#111" stroke-width="1.3"/><path d="M13.3 17l-2.3 7.5h4.6z" fill="#111"/><path d="M16.5 24.4H46M18 33.4H55" stroke="#111" stroke-width="1.4"/><path d="M16.5 24.4l4-2.2v4.4zM46 24.4l-4-2.2v4.4zM18 33.4l5-2.5v5zM55 33.4l-4.5-2.5v5z" fill="#111"/><rect x="25.6" y="19.5" width="9" height="5.7" fill="#333"/><rect x="28" y="28" width="6" height="5" fill="#555"/><rect x="28" y="38" width="6" height="5" fill="#444"/><path d="M17 37H22M17 40H22M36 30H46" stroke="#333" stroke-width=".8"/><defs><linearGradient id="t16g" x1="0" x2="1"><stop offset="0" stop-color="#EEE"/><stop offset=".5" stop-color="#999"/><stop offset="1" stop-color="#DDD"/></linearGradient></defs><rect x="47.7" y="17" width="61.5" height="7.4" fill="url(#t16g)"/><path d="M58 24L90 17" stroke="#666" stroke-width="1.3"/><path d="M49 19.5H58M92 20H100M92 22.5H98" stroke="#222" stroke-width=".8"/><rect x="14" y="35" width="2.5" height="10" fill="#FF0"/><path d="M7 37H10M7 41H9" stroke="#111" stroke-width=".8"/><circle cx="63" cy="43" r="1.5" fill="#333"/></svg>
</div>
<svg class="a" style="left:0;top:76px" width="199" height="21">
<path d="M0 20.5L8 3.5H57L61 12L57 20.5Z" fill="#A6C3F2" stroke="#3C68B8" stroke-width="1.1"/>
<path d="M57 21L64.5 3.5H112L121 20.5H199" fill="#fff" stroke="#3C68B8" stroke-width="1.1"/>
<path d="M57.5 21H121" stroke="#fff" stroke-width="1.5"/>
<path d="M0 20.5H0.5" stroke="#3C68B8"/>
</svg>
<div class="t" style="left:14px;top:82px;font-size:10.5px;color:#000">Outline</div>
<div class="t" style="left:71px;top:82px;font:bold 11px 'Liberation Sans';color:#000">Slides</div>
<svg class="a" style="left:184px;top:82px" width="9" height="8"><path d="M.8 .5L8.2 7.5M8.2 .5L.8 7.5" stroke="#000" stroke-width="1.6"/></svg>
<div class="a" style="left:184px;top:97px;width:15px;height:609px;background:linear-gradient(90deg,#F3F1EA,#FEFEFB)"></div>
<div class="a" style="left:184px;top:98px;width:15px;height:15px;border-radius:2px;background:linear-gradient(135deg,#D8E6FE,#B6CBF4);border:1px solid #FFFFFF"></div><svg class="a" style="left:187px;top:102px" width="9" height="6"><path d="M1 5L4.5 1.5L8 5" fill="none" stroke="#4D6185" stroke-width="2"/></svg>
<div class="a" style="left:184px;top:172px;width:15px;height:21px;border-radius:2px;background:linear-gradient(90deg,#C6D8FC,#B4CCF6);border:1px solid #fff"></div>
<svg class="a" style="left:188px;top:178px" width="7" height="8"><path d="M0 .5H7M0 2.5H7M0 4.5H7M0 6.5H7" stroke="#8EADE8" stroke-width="1"/></svg>
<div class="a" style="left:184px;top:691px;width:15px;height:15px;border-radius:2px;background:linear-gradient(135deg,#D8E6FE,#B6CBF4);border:1px solid #FFFFFF"></div><svg class="a" style="left:187px;top:695px" width="9" height="6"><path d="M1 1L4.5 4.5L8 1" fill="none" stroke="#4D6185" stroke-width="2"/></svg>
<div class="a" style="left:0;top:706px;width:199px;height:16px;background:#F3F1EA"></div>
<div class="a" style="left:0;top:706px;width:48px;height:16px;background:#C3DAF9"></div>
<div class="a" style="left:0;top:706px;width:16px;height:16px;border:1px solid #0A246A;background:#FBC689"></div>
<svg class="a" style="left:3px;top:709px" width="11" height="10"><rect x=".5" y=".5" width="10" height="9" fill="#fff" stroke="#000"/><path d="M3.5 .5V9.5M3.5 5.5H10.5" stroke="#000"/></svg>
<svg class="a" style="left:18px;top:709px" width="12" height="10"><rect x=".5" y=".5" width="4.5" height="3.5" fill="none" stroke="#000"/><rect x="6.5" y=".5" width="4.5" height="3.5" fill="none" stroke="#000"/><rect x=".5" y="5.5" width="4.5" height="3.5" fill="none" stroke="#000"/><rect x="6.5" y="5.5" width="4.5" height="3.5" fill="none" stroke="#000"/></svg>
<svg class="a" style="left:34px;top:708px" width="12" height="12"><rect x=".5" y=".5" width="11" height="5" fill="none" stroke="#000"/><path d="M6 6V10M3 11H9" stroke="#000"/></svg>
<div class="a" style="left:49px;top:707px;width:15px;height:15px;border-radius:2px;background:#F4F3EE;border:1px solid #E8E6DC"></div><svg class="a" style="left:53px;top:710px" width="6" height="9"><path d="M5 1L1.5 4.5L5 8" fill="none" stroke="#C9C7BA" stroke-width="2"/></svg>
<div class="a" style="left:184px;top:707px;width:15px;height:15px;border-radius:2px;background:#F4F3EE;border:1px solid #E8E6DC"></div><svg class="a" style="left:188px;top:710px" width="6" height="9"><path d="M1 1L4.5 4.5L1 8" fill="none" stroke="#C9C7BA" stroke-width="2"/></svg>
<!-- NOTES -->
<div class="a" style="left:199px;top:76px;width:6px;height:646px;background:#D6E5FB;border-right:1px solid #6F93D3"></div>
<div class="a" style="left:205px;top:679px;width:1075px;height:6px;background:#D6E5FB;border-bottom:1px solid #6F93D3"></div>
<div class="a" style="left:205px;top:685px;width:1075px;height:37px;background:#fff"></div>
<div class="t" style="left:207px;top:690px;font-size:13px;color:#000">Click to add notes</div>
<div class="a" style="left:1264px;top:686px;width:15px;height:15px;border:1px solid #E4E1D6;border-radius:2px;background:#F4F3EE"></div>
<svg class="a" style="left:1267px;top:690px" width="9" height="6"><path d="M1 5L4.5 1.5L8 5" fill="none" stroke="#C9C7BA" stroke-width="2"/></svg>
<div class="a" style="left:1264px;top:706px;width:15px;height:15px;border:1px solid #E4E1D6;border-radius:2px;background:#F4F3EE"></div>
<svg class="a" style="left:1267px;top:710px" width="9" height="6"><path d="M1 1L4.5 4.5L8 1" fill="none" stroke="#C9C7BA" stroke-width="2"/></svg>

<!-- DRAW TOOLBAR -->
<div class="a" style="left:0;top:722px;width:1280px;height:26px;background:#C3DAF9"></div>
<div class="tb" style="left:3px;top:723px;width:609px;border-radius:3px"></div>
<div class="a" style="left:609px;top:723px;width:11px;height:25px;border-radius:0 3px 3px 0;background:linear-gradient(#7DA2E6,#1C4DB3)"></div>
<svg class="a" style="left:611px;top:738px" width="8" height="8"><path d="M1 1H7M1 3H7L4 6Z" fill="#fff" stroke="#fff" stroke-width=".8"/></svg>
<div class="a" style="left:6px;top:727px;width:2px;height:16px;background:repeating-linear-gradient(#27418F 0 2px,transparent 2px 4px)"></div>
<div class="t" style="left:12px;top:729px;font-size:11px;color:#000">Draw</div>
<svg class="a" style="left:41px;top:734px" width="6" height="3"><path d="M0 0H6L3 3Z" fill="#000"/></svg>
<div class="a" style="left:51px;top:724px;width:23px;height:22px;border:1px solid #0A246A;background:linear-gradient(#FDD5A0,#F9A952)"></div>
<svg class="a" style="left:57px;top:727px" width="11" height="16"><path d="M1 1V13L4 10L6.5 15L8.5 14L6 9H10Z" fill="#fff" stroke="#3A5490" stroke-width="1"/></svg>
<div class="sep" style="left:77px;top:727px"></div>
<div class="t" style="left:82px;top:729px;font-size:11px;color:#000">AutoShapes</div>
<svg class="a" style="left:145px;top:734px" width="6" height="3"><path d="M0 0H6L3 3Z" fill="#000"/></svg>
<svg class="a" style="left:158px;top:728px" width="14" height="14"><path d="M1 1L12 12" stroke="#000" stroke-width="1.2"/></svg>
<svg class="a" style="left:182px;top:728px" width="14" height="14"><path d="M1 1L10 10" stroke="#000" stroke-width="1.2"/><path d="M12.5 12.5L6 10.5L10.5 6Z" fill="#000"/></svg>
<div class="a" style="left:203px;top:729px;width:16px;height:12px;border:1px solid #000"></div>
<div class="a" style="left:226px;top:729px;width:16px;height:12px;border:1px solid #000;border-radius:50%"></div>
<svg class="a" style="left:249px;top:728px" width="16" height="14"><rect x="0.5" y="0.5" width="15" height="13" fill="#fff" stroke="#6A7C98"/><text x="2" y="8" font-size="7" font-family="Liberation Sans" font-weight="bold" fill="#000">A</text><path d="M8 3H14M8 6H14M2 9.5H14M2 11.5H14" stroke="#555"/></svg>
<svg class="a" style="left:272px;top:728px" width="16" height="14"><rect x="0.5" y="0.5" width="15" height="13" fill="#fff" stroke="#6A7C98"/><path d="M2.5 3V12M4.5 3V12M6.5 3V12" stroke="#555"/><text x="8.5" y="8" font-size="7" font-family="Liberation Sans" font-weight="bold" fill="#000">A</text></svg>
<div class="t" style="left:296px;top:725px;font:italic bold 18px 'Liberation Serif';color:#3A6CD8">A</div>
<svg class="a" style="left:318px;top:727px" width="15" height="16"><circle cx="7.5" cy="2" r="1.6" fill="#E0A020"/><circle cx="13" cy="8" r="1.6" fill="#D04020"/><circle cx="7.5" cy="14" r="1.6" fill="#5050C0"/><circle cx="2" cy="8" r="1.6" fill="#40A040"/><path d="M9.5 2.5Q12 4 12.5 6M11.5 10Q10 13 9 13.5M6 13.5Q3 12 2.5 10M2.5 6Q3 3 5.5 2.5" fill="none" stroke="#444"/></svg>
<svg class="a" style="left:342px;top:727px" width="15" height="16"><rect x="0.5" y="0.5" width="14" height="15" fill="#F8F8F0" stroke="#333"/><circle cx="7.5" cy="6.5" r="3.5" fill="#8A8A8A"/><path d="M2 15Q7.5 7 13 15Z" fill="#E07030"/></svg>
<svg class="a" style="left:365px;top:727px" width="15" height="16"><rect x="0.5" y="0.5" width="14" height="15" fill="#fff" stroke="#6A7C98"/><path d="M1 14L6 7L10 11L12 9L14 12V15H1Z" fill="#A8BCD8" stroke="#4A6CA0" stroke-width=".6"/><circle cx="10" cy="5" r="2" fill="#E06020"/></svg>
<div class="sep" style="left:386px;top:727px"></div>
<svg class="a" style="left:392px;top:726px" width="18" height="18"><path d="M3 6L9 1L15 7L9 12Z" fill="#fff" stroke="#333"/><path d="M13 6Q17 9 15 11Q14 9 13 8Z" fill="#3A6CD8"/><rect x="0" y="14" width="17" height="3" fill="#D8D8D8"/></svg>
<svg class="a" style="left:415px;top:734px" width="6" height="3"><path d="M0 0H6L3 3Z" fill="#000"/></svg>
<svg class="a" style="left:427px;top:726px" width="18" height="18"><path d="M2 12L13 3L15 5L5 13Z" fill="#3A6CD8" stroke="#1A3C90" stroke-width=".6"/><path d="M13 3L16 0.5L17 2L15 5Z" fill="#F0B030"/><rect x="0" y="14" width="17" height="3" fill="#000"/></svg>
<svg class="a" style="left:450px;top:734px" width="6" height="3"><path d="M0 0H6L3 3Z" fill="#000"/></svg>
<div class="t" style="left:463px;top:726px;font:bold 14px 'Liberation Serif';color:#2A4C9C">A</div>
<div class="a" style="left:461px;top:739px;width:16px;height:4px;background:#000"></div>
<svg class="a" style="left:484px;top:734px" width="6" height="3"><path d="M0 0H6L3 3Z" fill="#000"/></svg>
<svg class="a" style="left:495px;top:729px" width="16" height="12"><rect x="0" y="1" width="16" height="2" fill="#000"/><rect x="0" y="5" width="16" height="2" fill="#000"/><rect x="0" y="9" width="16" height="2.5" fill="#000"/></svg>
<svg class="a" style="left:517px;top:729px" width="16" height="12"><path d="M0 2H16M0 5.5H16M0 9H16" stroke="#000" stroke-dasharray="1.5 1"/></svg>
<svg class="a" style="left:540px;top:727px" width="16" height="16"><path d="M1 4.5H15M1 11.5H15" stroke="#000" stroke-width="1.3"/><path d="M11 1L15 4.5L11 8M5 8L1 11.5L5 15" fill="none" stroke="#000" stroke-width="1.3"/></svg>
<div class="a" style="left:564px;top:728px;width:13px;height:13px;background:linear-gradient(135deg,#90D890,#2C9A2C);border:1px solid #1C6A1C;box-shadow:2px 2px 1px #9AA"></div>
<svg class="a" style="left:586px;top:726px" width="17" height="17"><path d="M1 5L5 1H16V12L12 16H1Z" fill="#5CB85C" stroke="#1C6A1C"/><path d="M1 5H12V16M12 5L16 1" fill="none" stroke="#1C6A1C"/><path d="M1.5 5.5H11.5V15.5H1.5Z" fill="#8AD88A"/></svg>

<!-- STATUS BAR -->
<div class="a" style="left:0;top:748px;width:1280px;height:22px;background:#ECE9D8;border-top:1px solid #fff"></div>
<div class="a" style="left:4px;top:751px;width:246px;height:17px;border:1px solid #D8D2BD;border-right-color:#D8D2BD"></div>
<div class="a" style="left:254px;top:751px;width:245px;height:17px;border:1px solid #D8D2BD"></div>
<div class="a" style="left:504px;top:751px;width:177px;height:17px;border:1px solid #D8D2BD"></div>
<div class="a" style="left:686px;top:751px;width:31px;height:17px;border:1px solid #D8D2BD"></div>
<div class="t" style="left:89px;top:754px;font-size:11px;color:#000">Slide 15 of 101</div>
<div class="t" style="left:337px;top:754px;font-size:11px;color:#000">Standarddesign</div>
<div class="t" style="left:557px;top:754px;font-size:11px;color:#000">Chinese (PRC)</div>

<!-- TASKBAR -->
<div class="a" style="left:0;top:770px;width:1280px;height:30px;background:linear-gradient(#3D95FF 0,#2A7EF0 2px,#245EDC 5px,#225AD8 24px,#1A4BC4 30px)"></div>
<div class="a" style="left:0;top:770px;width:96px;height:30px;border-radius:0 14px 14px 0/0 15px 15px 0;background:linear-gradient(#2E8A2E 0,#5CB85C 2px,#3FA03F 6px,#38983A 22px,#2C7E2C 28px,#236A23 30px);box-shadow:1px 0 2px #1C4A8C"></div>
<svg class="a" style="left:9px;top:775px" width="22" height="20"><g transform="skewX(-12) translate(4 0)" stroke="#1A5A1A" stroke-width=".4"><path d="M3 3Q6 1.5 10 3V9Q6 7.5 3 9Z" fill="#F05A22"/><path d="M11 3.5Q14 5 18 3.5V9.5Q14 11 11 9.5Z" fill="#7CC828"/><path d="M2 10.5Q5.5 9 9.5 10.5V16.5Q5.5 15 2 16.5Z" fill="#3A88F0"/><path d="M10.5 11Q14 12.5 17.5 11V17Q14 18.5 10.5 17Z" fill="#F8C81C"/></g></svg>
<div class="t" style="left:35px;top:775px;font:italic bold 17.5px 'Liberation Sans';color:#fff;text-shadow:1px 1px 1px #1A4A1A">start</div>
<div class="a" style="left:107px;top:773px;width:149px;height:25px;border-radius:3px;background:linear-gradient(#5A9CFF 0,#3C81F3 3px,#3C81F3 24px,#2E6AE0 30px);box-shadow:inset 1px 1px 0 #7AB0FF,inset -1px -1px 0 #2255C0"></div>
<svg class="a" style="left:116px;top:777px" width="16" height="16"><path d="M0.5 3.5H6L7 5H15.5V14.5H0.5Z" fill="#E8C058" stroke="#8A6A20"/><path d="M1 7H15V14H1Z" fill="#F8DC80"/></svg>
<div class="t" style="left:134px;top:779px;font-size:11px;color:#fff">seminar_level1_lev...</div>
<div class="a" style="left:257px;top:773px;width:149px;height:25px;border-radius:3px;background:linear-gradient(#5A9CFF 0,#3C81F3 3px,#3C81F3 24px,#2E6AE0 30px);box-shadow:inset 1px 1px 0 #7AB0FF,inset -1px -1px 0 #2255C0"></div>
<svg class="a" style="left:266px;top:777px" width="16" height="16"><rect width="16" height="16" fill="#C81E1E" stroke="#7A0A0A"/><path d="M3 13Q6 9 8 3Q9 9 13 11Q8 10 3 13Z" fill="none" stroke="#fff" stroke-width="1.2"/></svg>
<div class="t" style="left:284px;top:779px;font-size:11px;color:#fff"><span style="color:#F8C030;font-weight:bold">3</span> Adobe Reader 9.1</div>
<svg class="a" style="left:394px;top:784px" width="7" height="4"><path d="M0 0H7L3.5 4Z" fill="#fff"/></svg>
<div class="a" style="left:407px;top:773px;width:149px;height:25px;border-radius:3px;background:linear-gradient(#5A9CFF 0,#3C81F3 3px,#3C81F3 24px,#2E6AE0 30px);box-shadow:inset 1px 1px 0 #7AB0FF,inset -1px -1px 0 #2255C0"></div>
<svg class="a" style="left:416px;top:776px" width="17" height="18"><path d="M4.5 1.5H13L16 4.5V17.5H4.5Z" fill="#fff" stroke="#4A5A7A"/><path d="M7 6H14M7 9H14M7 12H14M7 15H12" stroke="#8AA"/><rect x="0.5" y="3.5" width="10" height="9" fill="#2A58B8" stroke="#1A3A80"/><text x="1.2" y="11" font-size="8" font-weight="bold" font-family="Liberation Sans" fill="#fff">W</text></svg>
<div class="t" style="left:435px;top:779px;font-size:11px;color:#fff">Copy of VIBNODE - ...</div>
<div class="a" style="left:558px;top:773px;width:149px;height:25px;border-radius:3px;background:linear-gradient(#5A9CFF 0,#3C81F3 3px,#3C81F3 24px,#2E6AE0 30px);box-shadow:inset 1px 1px 0 #7AB0FF,inset -1px -1px 0 #2255C0"></div>
<svg class="a" style="left:567px;top:776px" width="17" height="18"><path d="M4.5 1.5H13L16 4.5V17.5H4.5Z" fill="#fff" stroke="#4A5A7A"/><path d="M7 6H14M7 9H14M7 12H14M7 15H12" stroke="#8AA"/><rect x="0.5" y="3.5" width="10" height="9" fill="#2A58B8" stroke="#1A3A80"/><text x="1.2" y="11" font-size="8" font-weight="bold" font-family="Liberation Sans" fill="#fff">W</text></svg>
<div class="t" style="left:586px;top:779px;font-size:11px;color:#fff">for_VIBNODE - Micr...</div>
<div class="a" style="left:709px;top:773px;width:149px;height:25px;border-radius:3px;background:linear-gradient(#5A9CFF 0,#3C81F3 3px,#3C81F3 24px,#2E6AE0 30px);box-shadow:inset 1px 1px 0 #7AB0FF,inset -1px -1px 0 #2255C0"></div>
<svg class="a" style="left:718px;top:776px" width="17" height="18"><path d="M4.5 1.5H13L16 4.5V17.5H4.5Z" fill="#fff" stroke="#4A5A7A"/><path d="M7 6H14M7 9H14M7 12H14M7 15H12" stroke="#8AA"/><rect x="0.5" y="3.5" width="10" height="9" fill="#2A58B8" stroke="#1A3A80"/><text x="1.2" y="11" font-size="8" font-weight="bold" font-family="Liberation Sans" fill="#fff">W</text></svg>
<div class="t" style="left:737px;top:779px;font-size:11px;color:#fff">VIBNODE - Microsof...</div>
<div class="a" style="left:860px;top:773px;width:149px;height:25px;border-radius:3px;background:linear-gradient(#5A9CFF 0,#3C81F3 3px,#3C81F3 24px,#2E6AE0 30px);box-shadow:inset 1px 1px 0 #7AB0FF,inset -1px -1px 0 #2255C0"></div>
<svg class="a" style="left:869px;top:776px" width="17" height="18"><path d="M4.5 1.5H13L16 4.5V17.5H4.5Z" fill="#fff" stroke="#4A5A7A"/><path d="M7 6H14M7 9H14M7 12H14M7 15H12" stroke="#8AA"/><rect x="0.5" y="3.5" width="10" height="9" fill="#2A58B8" stroke="#1A3A80"/><text x="1.2" y="11" font-size="8" font-weight="bold" font-family="Liberation Sans" fill="#fff">W</text></svg>
<div class="t" style="left:888px;top:779px;font-size:11px;color:#fff">Doc1 - Microsoft Word</div>
<div class="a" style="left:1011px;top:773px;width:149px;height:25px;border-radius:3px;background:linear-gradient(#1A4BB8,#1E52C4 50%,#1C4FBC);box-shadow:inset 1px 1px 0 #103A90,inset -1px -1px 0 #2A62D0"></div>
<svg class="a" style="left:1020px;top:777px" width="16" height="16"><rect x="0.5" y="0.5" width="15" height="15" fill="#E86830" stroke="#A03A10"/><rect x="3" y="3" width="10" height="10" fill="#FBE4D0"/><circle cx="7" cy="8" r="3" fill="#D05020"/></svg>
<div class="t" style="left:1039px;top:779px;font-size:11px;color:#fff">Microsoft PowerPoi...</div>

<div class="a" style="left:1170px;top:778px;width:16px;height:16px;background:#3468D8"></div><div class="t" style="left:1170px;top:780px;font-size:11px;color:#fff">EN</div>
<div class="a" style="left:1204px;top:770px;width:76px;height:30px;background:linear-gradient(#18A4F8 0,#0F8CE8 4px,#0E86E0 26px,#0C78D0 30px);border-left:1px solid #1A5AC8"></div>
<div class="a" style="left:1197px;top:776px;width:19px;height:19px;border-radius:50%;background:radial-gradient(circle at 45% 40%,#6CC0FF,#1A78E0 70%,#0E5CC8);border:1px solid #B8D8F8"></div>
<svg class="a" style="left:1202px;top:781px" width="8" height="10"><path d="M6 1L2 5L6 9" fill="none" stroke="#fff" stroke-width="2"/></svg>
<svg class="a" style="left:1216px;top:777px" width="16" height="16"><rect x=".5" y=".5" width="15" height="15" fill="#000080" stroke="#8A8A8A"/><rect x="2" y="2" width="12" height="9" fill="#C0C0C0"/><rect x="2" y="12.5" width="5" height="2" fill="#C0C0C0"/><rect x="9" y="12.5" width="5" height="2" fill="#C0C0C0"/></svg>
<div class="t" style="left:1238px;top:779px;font-size:11.5px;color:#fff">22:57</div>

</body></html>
